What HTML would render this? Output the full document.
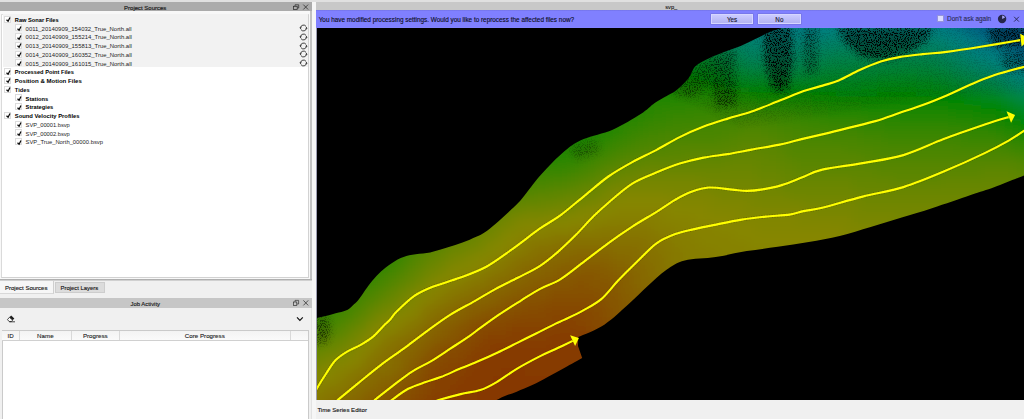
<!DOCTYPE html>
<html><head><meta charset="utf-8">
<style>
html,body{margin:0;padding:0;}
body{width:1024px;height:419px;overflow:hidden;background:#f0f0f0;position:relative;font-family:"Liberation Sans",sans-serif;font-size:6px;color:#000;}
.abs{position:absolute;}
.tbar{position:absolute;background:#ababab;text-align:center;font-size:6.1px;line-height:9.5px;color:#111;}
.row{position:absolute;left:0;width:300px;height:9px;line-height:9px;white-space:nowrap;}
.cb{position:absolute;width:7px;height:7px;background:#fff;border:0.5px solid #dcdcdc;top:-0.2px;box-sizing:border-box;}
.cb svg{position:absolute;left:-0.5px;top:-0.5px;}
.t{position:absolute;top:0;white-space:nowrap;}
.btn{position:absolute;top:13.7px;height:10.4px;width:42.8px;background:linear-gradient(#cbcbff,#b3b3f3);border:0.5px solid #d6d6ff;box-shadow:0 0 0 0.6px #7272de;box-sizing:border-box;text-align:center;font-size:6.3px;line-height:10.2px;color:#14142c;-webkit-text-stroke:0.12px #14142c;}
.hd{position:absolute;top:0;height:9px;line-height:10.4px;text-align:center;font-size:6.2px;color:#1a1a1a;-webkit-text-stroke:0.1px #1a1a1a;border-right:0.6px solid #d9d9d9;box-sizing:border-box;}
</style></head><body>

<div class="abs" style="left:0;top:0;width:1024px;height:2.1px;background:#e0e0e0;"></div>
<!-- LEFT: Project Sources -->
<div class="abs" style="left:-2px;top:2.1px;width:313.9px;height:278.5px;background:linear-gradient(#ababab,#ababab 277px,#a6a6a6 277.2px,#d0d0d0 278.5px);"></div>
<div class="abs" style="left:0;top:10.9px;width:310.2px;height:268.2px;background:#f8f8f8;"></div>
<div class="abs" style="left:310.2px;top:10.9px;width:1.7px;height:268.4px;background:#c2c2c2;"></div>
<span class="t" style="left:124.1px;top:3.9px;font-size:5.98px;line-height:8px;color:#1c1c1c;-webkit-text-stroke:0.18px #1c1c1c;">Project Sources</span>
<svg class="abs" style="left:286px;top:2px;" width="26" height="10" viewBox="0 0 26 10">
 <g fill="none" stroke="#2e2e2e" stroke-width="0.75">
  <rect x="7.5" y="4.3" width="3.7" height="3.2"/><path d="M9 4.3 V2.8 H12.7 V6 H11.2"/>
  <path d="M17.3 2.6 L22.1 7.5 M22.1 2.6 L17.3 7.5" stroke-width="0.8"/>
 </g>
</svg>
<div class="abs" style="left:1.4px;top:13.6px;width:307.3px;height:264px;background:#fff;border:0.7px solid #d2d2d2;border-top-color:#e0e0e0;border-left-color:#dadada;box-sizing:border-box;"></div>
<div class="abs" style="left:2.6px;top:14.3px;width:305.4px;height:52.9px;background:#f2f2f2;"></div>
<div class="row" style="top:15.90px;"><span class="cb" style="left:4.4px;"><svg width="7" height="7" viewBox="0 0 7 7"><path d="M1.5 3.8 L3.1 5.3 L5.0 1.4" fill="none" stroke="#0a0a0a" stroke-width="1.25" stroke-linejoin="miter"/></svg></span><span class="t" style="left:14.8px;font-size:5.68px;font-weight:bold;color:#000;">Raw Sonar Files</span></div>
<div class="row" style="top:24.65px;"><span class="cb" style="left:15.1px;"><svg width="7" height="7" viewBox="0 0 7 7"><path d="M1.5 3.8 L3.1 5.3 L5.0 1.4" fill="none" stroke="#0a0a0a" stroke-width="1.25" stroke-linejoin="miter"/></svg></span><span class="t" style="left:25.6px;font-size:5.93px;font-weight:normal;color:#1e1e1e;">0011_20140909_154032_True_North.all</span><span class="abs" style="left:298.7px;top:-0.5px;"><svg width="9" height="8" viewBox="0 0 9 8"><path d="M1.55 3.7 A3 3 0 0 1 7.1 2.5 M7.45 4.3 A3 3 0 0 1 1.9 5.5" fill="none" stroke="#222" stroke-width="0.85"/><path d="M0.5 3.3 L2.7 3.5 L1.4 5.2 Z M8.5 4.7 L6.3 4.5 L7.6 2.8 Z" fill="#222"/></svg></span></div>
<div class="row" style="top:33.40px;"><span class="cb" style="left:15.1px;"><svg width="7" height="7" viewBox="0 0 7 7"><path d="M1.5 3.8 L3.1 5.3 L5.0 1.4" fill="none" stroke="#0a0a0a" stroke-width="1.25" stroke-linejoin="miter"/></svg></span><span class="t" style="left:25.6px;font-size:5.91px;font-weight:normal;color:#1e1e1e;">0012_20140909_155214_True_North.all</span><span class="abs" style="left:298.7px;top:-0.5px;"><svg width="9" height="8" viewBox="0 0 9 8"><path d="M1.55 3.7 A3 3 0 0 1 7.1 2.5 M7.45 4.3 A3 3 0 0 1 1.9 5.5" fill="none" stroke="#222" stroke-width="0.85"/><path d="M0.5 3.3 L2.7 3.5 L1.4 5.2 Z M8.5 4.7 L6.3 4.5 L7.6 2.8 Z" fill="#222"/></svg></span></div>
<div class="row" style="top:42.15px;"><span class="cb" style="left:15.1px;"><svg width="7" height="7" viewBox="0 0 7 7"><path d="M1.5 3.8 L3.1 5.3 L5.0 1.4" fill="none" stroke="#0a0a0a" stroke-width="1.25" stroke-linejoin="miter"/></svg></span><span class="t" style="left:25.6px;font-size:5.91px;font-weight:normal;color:#1e1e1e;">0013_20140909_155813_True_North.all</span><span class="abs" style="left:298.7px;top:-0.5px;"><svg width="9" height="8" viewBox="0 0 9 8"><path d="M1.55 3.7 A3 3 0 0 1 7.1 2.5 M7.45 4.3 A3 3 0 0 1 1.9 5.5" fill="none" stroke="#222" stroke-width="0.85"/><path d="M0.5 3.3 L2.7 3.5 L1.4 5.2 Z M8.5 4.7 L6.3 4.5 L7.6 2.8 Z" fill="#222"/></svg></span></div>
<div class="row" style="top:50.90px;"><span class="cb" style="left:15.1px;"><svg width="7" height="7" viewBox="0 0 7 7"><path d="M1.5 3.8 L3.1 5.3 L5.0 1.4" fill="none" stroke="#0a0a0a" stroke-width="1.25" stroke-linejoin="miter"/></svg></span><span class="t" style="left:25.6px;font-size:5.91px;font-weight:normal;color:#1e1e1e;">0014_20140909_160352_True_North.all</span><span class="abs" style="left:298.7px;top:-0.5px;"><svg width="9" height="8" viewBox="0 0 9 8"><path d="M1.55 3.7 A3 3 0 0 1 7.1 2.5 M7.45 4.3 A3 3 0 0 1 1.9 5.5" fill="none" stroke="#222" stroke-width="0.85"/><path d="M0.5 3.3 L2.7 3.5 L1.4 5.2 Z M8.5 4.7 L6.3 4.5 L7.6 2.8 Z" fill="#222"/></svg></span></div>
<div class="row" style="top:59.65px;"><span class="cb" style="left:15.1px;"><svg width="7" height="7" viewBox="0 0 7 7"><path d="M1.5 3.8 L3.1 5.3 L5.0 1.4" fill="none" stroke="#0a0a0a" stroke-width="1.25" stroke-linejoin="miter"/></svg></span><span class="t" style="left:25.6px;font-size:5.91px;font-weight:normal;color:#1e1e1e;">0015_20140909_161015_True_North.all</span><span class="abs" style="left:298.7px;top:-0.5px;"><svg width="9" height="8" viewBox="0 0 9 8"><path d="M1.55 3.7 A3 3 0 0 1 7.1 2.5 M7.45 4.3 A3 3 0 0 1 1.9 5.5" fill="none" stroke="#222" stroke-width="0.85"/><path d="M0.5 3.3 L2.7 3.5 L1.4 5.2 Z M8.5 4.7 L6.3 4.5 L7.6 2.8 Z" fill="#222"/></svg></span></div>
<div class="row" style="top:68.40px;"><span class="cb" style="left:4.4px;"><svg width="7" height="7" viewBox="0 0 7 7"><path d="M1.5 3.8 L3.1 5.3 L5.0 1.4" fill="none" stroke="#0a0a0a" stroke-width="1.25" stroke-linejoin="miter"/></svg></span><span class="t" style="left:14.8px;font-size:5.7px;font-weight:bold;color:#000;">Processed Point Files</span></div>
<div class="row" style="top:77.15px;"><span class="cb" style="left:4.4px;"><svg width="7" height="7" viewBox="0 0 7 7"><path d="M1.5 3.8 L3.1 5.3 L5.0 1.4" fill="none" stroke="#0a0a0a" stroke-width="1.25" stroke-linejoin="miter"/></svg></span><span class="t" style="left:14.8px;font-size:6.07px;font-weight:bold;color:#000;">Position &amp; Motion Files</span></div>
<div class="row" style="top:85.90px;"><span class="cb" style="left:4.4px;"><svg width="7" height="7" viewBox="0 0 7 7"><path d="M1.5 3.8 L3.1 5.3 L5.0 1.4" fill="none" stroke="#0a0a0a" stroke-width="1.25" stroke-linejoin="miter"/></svg></span><span class="t" style="left:14.8px;font-size:5.7px;font-weight:bold;color:#000;">Tides</span></div>
<div class="row" style="top:94.65px;"><span class="cb" style="left:15.1px;"><svg width="7" height="7" viewBox="0 0 7 7"><path d="M1.5 3.8 L3.1 5.3 L5.0 1.4" fill="none" stroke="#0a0a0a" stroke-width="1.25" stroke-linejoin="miter"/></svg></span><span class="t" style="left:25.6px;font-size:5.75px;font-weight:bold;color:#000;">Stations</span></div>
<div class="row" style="top:103.40px;"><span class="cb" style="left:15.1px;"><svg width="7" height="7" viewBox="0 0 7 7"><path d="M1.5 3.8 L3.1 5.3 L5.0 1.4" fill="none" stroke="#0a0a0a" stroke-width="1.25" stroke-linejoin="miter"/></svg></span><span class="t" style="left:25.6px;font-size:5.73px;font-weight:bold;color:#000;">Strategies</span></div>
<div class="row" style="top:112.15px;"><span class="cb" style="left:4.4px;"><svg width="7" height="7" viewBox="0 0 7 7"><path d="M1.5 3.8 L3.1 5.3 L5.0 1.4" fill="none" stroke="#0a0a0a" stroke-width="1.25" stroke-linejoin="miter"/></svg></span><span class="t" style="left:14.8px;font-size:5.83px;font-weight:bold;color:#000;">Sound Velocity Profiles</span></div>
<div class="row" style="top:120.90px;"><span class="cb" style="left:15.1px;"><svg width="7" height="7" viewBox="0 0 7 7"><path d="M1.5 3.8 L3.1 5.3 L5.0 1.4" fill="none" stroke="#0a0a0a" stroke-width="1.25" stroke-linejoin="miter"/></svg></span><span class="t" style="left:25.6px;font-size:5.73px;font-weight:normal;color:#1e1e1e;">SVP_00001.bsvp</span></div>
<div class="row" style="top:129.65px;"><span class="cb" style="left:15.1px;"><svg width="7" height="7" viewBox="0 0 7 7"><path d="M1.5 3.8 L3.1 5.3 L5.0 1.4" fill="none" stroke="#0a0a0a" stroke-width="1.25" stroke-linejoin="miter"/></svg></span><span class="t" style="left:25.6px;font-size:5.73px;font-weight:normal;color:#1e1e1e;">SVP_00002.bsvp</span></div>
<div class="row" style="top:138.40px;"><span class="cb" style="left:15.1px;"><svg width="7" height="7" viewBox="0 0 7 7"><path d="M1.5 3.8 L3.1 5.3 L5.0 1.4" fill="none" stroke="#0a0a0a" stroke-width="1.25" stroke-linejoin="miter"/></svg></span><span class="t" style="left:25.6px;font-size:5.82px;font-weight:normal;color:#1e1e1e;">SVP_True_North_00000.bsvp</span></div>

<!-- tabs -->
<div class="abs" style="left:0;top:280.6px;width:54.3px;height:13px;background:#f6f6f6;border-right:0.6px solid #cfcfcf;border-bottom:0.6px solid #d8d8d8;box-sizing:border-box;"></div>
<div class="abs" style="left:54.5px;top:281.7px;width:50px;height:10.9px;background:#dcdcdc;border:0.6px solid #cdcdcd;box-sizing:border-box;"></div>
<span class="t" style="left:5px;top:283.7px;font-size:6.02px;line-height:8px;color:#111;-webkit-text-stroke:0.12px #111;">Project Sources</span>
<span class="t" style="left:60.5px;top:284px;font-size:5.92px;line-height:8px;color:#111;-webkit-text-stroke:0.12px #111;">Project Layers</span>

<!-- Job Activity -->
<div class="abs" style="left:310.6px;top:298.2px;width:1.3px;height:121px;background:#e2e2e2;"></div>
<div class="tbar" style="left:0;top:298.2px;width:311.8px;height:9.4px;background:#c6c6c6;"></div><span class="t" style="left:130.5px;top:299.6px;font-size:5.9px;line-height:8px;color:#1c1c1c;-webkit-text-stroke:0.15px #1c1c1c;">Job Activity</span>
<svg class="abs" style="left:286px;top:298.2px;" width="26" height="10" viewBox="0 0 26 10">
 <g fill="none" stroke="#333" stroke-width="0.7">
  <rect x="7.4" y="4" width="3.4" height="3.4"/><path d="M9 4 V2.4 H12.6 V6 H10.8"/>
  <path d="M17.4 2.4 L22.2 7.4 M22.2 2.4 L17.4 7.4" stroke-width="0.8"/>
 </g>
</svg>
<!-- eraser icon -->
<svg class="abs" style="left:6px;top:314px;" width="10" height="10" viewBox="0 0 10 10">
 <path d="M5.2 1.6 L8.3 4.6 L6.7 6.2 L3.4 3.3 Z" fill="#1c1c1c"/>
 <path d="M3.4 3.3 L6.7 6.2 L5.2 7.6 L3.2 7.6 L1.5 5.6 Z" fill="#fafafa" stroke="#1c1c1c" stroke-width="0.8" stroke-linejoin="round"/>
 <path d="M3.4 7.8 H9" stroke="#1c1c1c" stroke-width="0.8"/>
</svg>
<svg class="abs" style="left:295px;top:314px;" width="10" height="10" viewBox="0 0 10 10"><path d="M2 3.4 L4.9 6.3 L7.8 3.4" fill="none" stroke="#111" stroke-width="1.2"/></svg>
<!-- table -->
<div class="abs" style="left:1.5px;top:330.2px;width:307.2px;height:90px;background:#fff;border:0.8px solid #cacaca;box-sizing:border-box;"></div>
<div class="abs" style="left:2.3px;top:331px;width:305.6px;height:9px;background:linear-gradient(#f3f3f3,#fafafa);border-bottom:0.6px solid #d0d0d0;">
 <div class="hd" style="left:0;width:17.6px;">ID</div>
 <div class="hd" style="left:17.6px;width:51.9px;">Name</div>
 <div class="hd" style="left:69.5px;width:48px;">Progress</div>
 <div class="hd" style="left:117.5px;width:171px;">Core Progress</div>
</div>

<!-- splitter -->
<div class="abs" style="left:311.9px;top:2.1px;width:3.9px;height:417px;background:#f6f6f6;"></div>

<!-- MAIN -->
<div class="abs" style="left:316.3px;top:2.1px;width:708px;height:7.8px;background:#c8c8c8;"></div>
<span class="t" style="left:665.2px;top:2.7px;font-size:5.7px;line-height:8px;color:#111;-webkit-text-stroke:0.1px #111;">svp_</span>
<div class="abs" style="left:316.3px;top:9.8px;width:708px;height:18.2px;background:linear-gradient(#7272e4,#8080ff 1.2px,#8080ff 17.4px,#8888ff 17.7px,#7070e0 18.2px);"></div>
<span class="t" style="left:318.7px;top:15.5px;font-size:6.39px;line-height:8px;color:#0c0c20;-webkit-text-stroke:0.12px #0c0c20;">You have modified processing settings. Would you like to reprocess the affected files now?</span>
<div class="btn" style="left:710.7px;">Yes</div>
<div class="btn" style="left:758px;">No</div>
<div class="abs" style="left:936.8px;top:15.3px;width:7.4px;height:7px;background:#dcdcff;border:0.5px solid #9494dc;box-sizing:border-box;"></div>
<span class="t" style="left:947px;top:15.4px;font-size:6.45px;line-height:8px;color:#2a2a50;-webkit-text-stroke:0.1px #2a2a50;">Don't ask again</span>
<svg class="abs" style="left:996px;top:13px;" width="26" height="12" viewBox="0 0 26 12">
 <circle cx="6.1" cy="6" r="4.2" fill="#26264a"/>
 <path d="M6.1 6 L6.1 2.6 A3.4 3.4 0 0 1 9.1 4.4 Z" fill="#a0a0f0"/>
 <path d="M18.1 3.8 L22.9 8.6 M22.9 3.8 L18.1 8.6" stroke="#2a2a58" stroke-width="0.95" fill="none"/>
</svg>

<div class="abs" id="map" style="left:316.3px;top:27.9px;width:707.7px;height:371.8px;background:#000;overflow:hidden;border-left:0.8px solid #9c9cb0;box-sizing:border-box;">
<svg class="abs" style="left:0;top:0;" width="707.7" height="371.8" viewBox="316.3 27.9 707.7 371.8">
<defs>
<clipPath id="cp"><path d="M314.0 318.5C315.8 318.1 321.0 317.0 325.0 316.0C329.0 315.0 334.3 313.6 338.0 312.5C341.7 311.4 344.7 310.8 347.0 309.6C349.3 308.4 350.2 307.2 352.0 305.5C353.8 303.8 355.2 303.1 358.0 299.5C360.8 295.9 365.7 288.3 369.0 284.0C372.3 279.7 374.9 276.8 378.0 273.7C381.1 270.6 384.0 268.1 387.7 265.5C391.4 262.9 396.0 259.8 400.0 258.0C404.0 256.2 407.3 255.4 411.6 254.6C415.9 253.8 421.3 253.9 426.0 253.0C430.7 252.1 435.2 250.6 440.0 249.3C444.8 248.0 449.8 246.6 454.6 245.0C459.4 243.4 464.3 241.6 469.0 239.6C473.7 237.6 478.7 235.7 483.0 233.0C487.3 230.3 490.8 227.1 495.0 223.6C499.2 220.1 503.7 216.1 508.0 212.0C512.3 207.9 515.7 205.2 521.0 199.0C526.3 192.8 532.8 183.0 540.0 175.0C547.2 167.0 556.8 157.0 564.0 151.0C571.2 145.0 575.0 142.6 583.0 139.0C591.0 135.4 602.5 133.8 612.0 129.6C621.5 125.4 633.0 118.4 640.0 114.0C647.0 109.6 649.7 106.0 654.0 103.0C658.3 100.0 662.3 98.2 666.0 96.0C669.7 93.8 672.3 93.0 676.0 90.0C679.7 87.0 684.8 82.0 688.0 78.0C691.2 74.0 691.5 69.3 695.0 66.0C698.5 62.7 704.2 60.3 709.0 58.0C713.8 55.7 718.3 54.0 723.5 52.0C728.7 50.0 734.8 48.2 740.0 46.0C745.2 43.8 749.8 41.3 754.6 39.0C759.4 36.7 764.6 33.8 769.0 32.0C773.4 30.2 777.5 29.7 781.0 28.0C784.5 26.3 788.5 23.0 790.0 22.0L1030 20L1030 172C1029.0 172.5 1030.0 172.5 1024.0 175.0C1018.0 177.5 1003.0 183.7 994.0 187.0C985.0 190.3 980.3 191.5 970.0 195.0C959.7 198.5 943.5 204.2 932.0 208.0C920.5 211.8 911.3 214.3 901.0 217.5C890.7 220.7 880.3 223.9 870.0 227.0C859.7 230.1 849.3 233.5 839.0 236.0C828.7 238.5 818.3 240.2 808.0 242.0C797.7 243.8 787.3 245.2 777.0 246.7C766.7 248.2 756.3 249.3 746.0 251.0C735.7 252.7 725.3 255.4 715.0 257.0C704.7 258.6 692.2 258.3 684.0 260.5C675.8 262.7 671.7 265.8 665.5 270.0C659.3 274.2 653.2 280.3 647.0 286.0C640.8 291.7 635.2 297.6 628.0 304.0C620.8 310.4 612.4 318.8 604.0 324.3C595.6 329.8 581.9 334.9 577.5 337.0L577.3 346L581.5 358C578.6 359.6 569.8 364.5 564.0 367.7C558.2 370.9 552.4 374.1 547.0 377.0C541.6 379.9 536.8 382.6 531.6 385.0C526.4 387.4 520.8 389.7 516.0 391.6C511.2 393.5 506.8 394.7 503.0 396.3C499.2 397.9 494.7 400.6 493.0 401.5L314 402Z"/></clipPath>
<filter id="cb" filterUnits="userSpaceOnUse" x="290" y="0" width="760" height="430"><feGaussianBlur stdDeviation="5"/></filter>
<filter id="db" filterUnits="userSpaceOnUse" x="290" y="0" width="760" height="430"><feGaussianBlur stdDeviation="3.5"/></filter>
<filter id="nz" filterUnits="userSpaceOnUse" x="290" y="0" width="760" height="430"><feTurbulence type="fractalNoise" baseFrequency="0.9" numOctaves="2" seed="7" result="n"/><feColorMatrix in="n" type="matrix" values="0 0 0 0 0  0 0 0 0 0  0 0 0 0 0  0 0 0 9 -4.6"/></filter>
<mask id="dm" maskUnits="userSpaceOnUse" x="290" y="0" width="760" height="430"><g filter="url(#db)" fill="#fff">
<path d="M763 27L791 27L792 60L787 91L772 90L764 60Z" opacity="1"/>
<path d="M802 27L817 27L816 72L804 74Z" opacity="0.5"/>
<path d="M836 27L932 27L926 40L908 52L886 59L862 57L846 44Z" opacity="1"/>
<path d="M988 27L1030 27L1030 47L992 47Z" opacity="0.85"/>
<path d="M1000 54L1030 52L1030 72L1004 70Z" opacity="0.55"/>
<path d="M706 58L733 50L736 104L716 108Z" opacity="0.55"/>
<path d="M672 94L690 70L706 58L710 84L690 98Z" opacity="0.45"/>
<path d="M740 27L1030 27L1030 90L900 100L740 125L690 100Z" opacity="0.1"/>
<path d="M314 318L326 316L330 330L326 342L314 344Z" opacity="0.5"/>
<path d="M568 146L596 140L598 152L576 159Z" opacity="0.3"/>
</g></mask>
</defs>
<g clip-path="url(#cp)">
<g filter="url(#cb)">
<path fill="#863302" d="M548 392h8.5v8.5h-8.5zM508 400h8.5v8.5h-8.5zM516 400h8.5v8.5h-8.5zM524 400h8.5v8.5h-8.5zM532 400h8.5v8.5h-8.5zM484 408h8.5v8.5h-8.5zM492 408h8.5v8.5h-8.5zM500 408h8.5v8.5h-8.5zM508 408h8.5v8.5h-8.5zM516 408h8.5v8.5h-8.5zM460 416h8.5v8.5h-8.5zM468 416h8.5v8.5h-8.5zM476 416h8.5v8.5h-8.5zM484 416h8.5v8.5h-8.5zM492 416h8.5v8.5h-8.5z"/>
<path fill="#863702" d="M500 368h8.5v8.5h-8.5zM508 368h8.5v8.5h-8.5zM516 368h8.5v8.5h-8.5zM492 376h8.5v8.5h-8.5zM500 376h8.5v8.5h-8.5zM508 376h8.5v8.5h-8.5zM516 376h8.5v8.5h-8.5zM524 376h8.5v8.5h-8.5zM532 376h8.5v8.5h-8.5zM540 376h8.5v8.5h-8.5zM548 376h8.5v8.5h-8.5zM556 376h8.5v8.5h-8.5zM564 376h8.5v8.5h-8.5zM572 376h8.5v8.5h-8.5zM580 376h8.5v8.5h-8.5zM484 384h8.5v8.5h-8.5zM492 384h8.5v8.5h-8.5zM500 384h8.5v8.5h-8.5zM508 384h8.5v8.5h-8.5zM516 384h8.5v8.5h-8.5zM524 384h8.5v8.5h-8.5zM532 384h8.5v8.5h-8.5zM540 384h8.5v8.5h-8.5zM548 384h8.5v8.5h-8.5zM556 384h8.5v8.5h-8.5zM564 384h8.5v8.5h-8.5zM476 392h8.5v8.5h-8.5zM484 392h8.5v8.5h-8.5zM492 392h8.5v8.5h-8.5zM500 392h8.5v8.5h-8.5zM508 392h8.5v8.5h-8.5zM516 392h8.5v8.5h-8.5zM524 392h8.5v8.5h-8.5zM532 392h8.5v8.5h-8.5zM540 392h8.5v8.5h-8.5zM468 400h8.5v8.5h-8.5zM476 400h8.5v8.5h-8.5zM484 400h8.5v8.5h-8.5zM492 400h8.5v8.5h-8.5zM500 400h8.5v8.5h-8.5zM444 408h8.5v8.5h-8.5zM452 408h8.5v8.5h-8.5zM460 408h8.5v8.5h-8.5zM468 408h8.5v8.5h-8.5zM476 408h8.5v8.5h-8.5zM436 416h8.5v8.5h-8.5zM444 416h8.5v8.5h-8.5zM452 416h8.5v8.5h-8.5z"/>
<path fill="#863b02" d="M548 336h8.5v8.5h-8.5zM556 336h8.5v8.5h-8.5zM564 336h8.5v8.5h-8.5zM572 336h8.5v8.5h-8.5zM492 344h8.5v8.5h-8.5zM500 344h8.5v8.5h-8.5zM508 344h8.5v8.5h-8.5zM516 344h8.5v8.5h-8.5zM524 344h8.5v8.5h-8.5zM532 344h8.5v8.5h-8.5zM540 344h8.5v8.5h-8.5zM548 344h8.5v8.5h-8.5zM556 344h8.5v8.5h-8.5zM564 344h8.5v8.5h-8.5zM572 344h8.5v8.5h-8.5zM580 344h8.5v8.5h-8.5zM484 352h8.5v8.5h-8.5zM492 352h8.5v8.5h-8.5zM500 352h8.5v8.5h-8.5zM508 352h8.5v8.5h-8.5zM516 352h8.5v8.5h-8.5zM524 352h8.5v8.5h-8.5zM532 352h8.5v8.5h-8.5zM540 352h8.5v8.5h-8.5zM548 352h8.5v8.5h-8.5zM556 352h8.5v8.5h-8.5zM564 352h8.5v8.5h-8.5zM572 352h8.5v8.5h-8.5zM580 352h8.5v8.5h-8.5zM476 360h8.5v8.5h-8.5zM484 360h8.5v8.5h-8.5zM492 360h8.5v8.5h-8.5zM500 360h8.5v8.5h-8.5zM508 360h8.5v8.5h-8.5zM516 360h8.5v8.5h-8.5zM524 360h8.5v8.5h-8.5zM532 360h8.5v8.5h-8.5zM540 360h8.5v8.5h-8.5zM548 360h8.5v8.5h-8.5zM556 360h8.5v8.5h-8.5zM564 360h8.5v8.5h-8.5zM572 360h8.5v8.5h-8.5zM580 360h8.5v8.5h-8.5zM588 360h8.5v8.5h-8.5zM468 368h8.5v8.5h-8.5zM476 368h8.5v8.5h-8.5zM484 368h8.5v8.5h-8.5zM492 368h8.5v8.5h-8.5zM524 368h8.5v8.5h-8.5zM532 368h8.5v8.5h-8.5zM540 368h8.5v8.5h-8.5zM548 368h8.5v8.5h-8.5zM556 368h8.5v8.5h-8.5zM564 368h8.5v8.5h-8.5zM572 368h8.5v8.5h-8.5zM580 368h8.5v8.5h-8.5zM588 368h8.5v8.5h-8.5zM460 376h8.5v8.5h-8.5zM468 376h8.5v8.5h-8.5zM476 376h8.5v8.5h-8.5zM484 376h8.5v8.5h-8.5zM452 384h8.5v8.5h-8.5zM460 384h8.5v8.5h-8.5zM468 384h8.5v8.5h-8.5zM476 384h8.5v8.5h-8.5zM444 392h8.5v8.5h-8.5zM452 392h8.5v8.5h-8.5zM460 392h8.5v8.5h-8.5zM468 392h8.5v8.5h-8.5zM436 400h8.5v8.5h-8.5zM444 400h8.5v8.5h-8.5zM452 400h8.5v8.5h-8.5zM460 400h8.5v8.5h-8.5zM428 408h8.5v8.5h-8.5zM436 408h8.5v8.5h-8.5zM420 416h8.5v8.5h-8.5zM428 416h8.5v8.5h-8.5z"/>
<path fill="#864002" d="M556 320h8.5v8.5h-8.5zM564 320h8.5v8.5h-8.5zM508 328h8.5v8.5h-8.5zM516 328h8.5v8.5h-8.5zM524 328h8.5v8.5h-8.5zM532 328h8.5v8.5h-8.5zM540 328h8.5v8.5h-8.5zM548 328h8.5v8.5h-8.5zM556 328h8.5v8.5h-8.5zM564 328h8.5v8.5h-8.5zM572 328h8.5v8.5h-8.5zM580 328h8.5v8.5h-8.5zM484 336h8.5v8.5h-8.5zM492 336h8.5v8.5h-8.5zM500 336h8.5v8.5h-8.5zM508 336h8.5v8.5h-8.5zM516 336h8.5v8.5h-8.5zM524 336h8.5v8.5h-8.5zM532 336h8.5v8.5h-8.5zM540 336h8.5v8.5h-8.5zM580 336h8.5v8.5h-8.5zM588 336h8.5v8.5h-8.5zM476 344h8.5v8.5h-8.5zM484 344h8.5v8.5h-8.5zM588 344h8.5v8.5h-8.5zM468 352h8.5v8.5h-8.5zM476 352h8.5v8.5h-8.5zM588 352h8.5v8.5h-8.5zM596 352h8.5v8.5h-8.5zM460 360h8.5v8.5h-8.5zM468 360h8.5v8.5h-8.5zM596 360h8.5v8.5h-8.5zM452 368h8.5v8.5h-8.5zM460 368h8.5v8.5h-8.5zM436 376h8.5v8.5h-8.5zM444 376h8.5v8.5h-8.5zM452 376h8.5v8.5h-8.5zM436 384h8.5v8.5h-8.5zM444 384h8.5v8.5h-8.5zM428 392h8.5v8.5h-8.5zM436 392h8.5v8.5h-8.5zM420 400h8.5v8.5h-8.5zM428 400h8.5v8.5h-8.5zM420 408h8.5v8.5h-8.5zM412 416h8.5v8.5h-8.5z"/>
<path fill="#864402" d="M548 312h8.5v8.5h-8.5zM556 312h8.5v8.5h-8.5zM564 312h8.5v8.5h-8.5zM572 312h8.5v8.5h-8.5zM508 320h8.5v8.5h-8.5zM516 320h8.5v8.5h-8.5zM524 320h8.5v8.5h-8.5zM532 320h8.5v8.5h-8.5zM540 320h8.5v8.5h-8.5zM548 320h8.5v8.5h-8.5zM572 320h8.5v8.5h-8.5zM580 320h8.5v8.5h-8.5zM484 328h8.5v8.5h-8.5zM492 328h8.5v8.5h-8.5zM500 328h8.5v8.5h-8.5zM588 328h8.5v8.5h-8.5zM476 336h8.5v8.5h-8.5zM596 336h8.5v8.5h-8.5zM468 344h8.5v8.5h-8.5zM596 344h8.5v8.5h-8.5zM460 352h8.5v8.5h-8.5zM444 360h8.5v8.5h-8.5zM452 360h8.5v8.5h-8.5zM436 368h8.5v8.5h-8.5zM444 368h8.5v8.5h-8.5zM428 376h8.5v8.5h-8.5zM428 384h8.5v8.5h-8.5zM420 392h8.5v8.5h-8.5zM412 400h8.5v8.5h-8.5zM404 408h8.5v8.5h-8.5zM412 408h8.5v8.5h-8.5zM396 416h8.5v8.5h-8.5zM404 416h8.5v8.5h-8.5z"/>
<path fill="#864902" d="M540 304h8.5v8.5h-8.5zM548 304h8.5v8.5h-8.5zM556 304h8.5v8.5h-8.5zM564 304h8.5v8.5h-8.5zM572 304h8.5v8.5h-8.5zM580 304h8.5v8.5h-8.5zM516 312h8.5v8.5h-8.5zM524 312h8.5v8.5h-8.5zM532 312h8.5v8.5h-8.5zM540 312h8.5v8.5h-8.5zM580 312h8.5v8.5h-8.5zM588 312h8.5v8.5h-8.5zM492 320h8.5v8.5h-8.5zM500 320h8.5v8.5h-8.5zM588 320h8.5v8.5h-8.5zM596 320h8.5v8.5h-8.5zM476 328h8.5v8.5h-8.5zM596 328h8.5v8.5h-8.5zM468 336h8.5v8.5h-8.5zM604 336h8.5v8.5h-8.5zM452 344h8.5v8.5h-8.5zM460 344h8.5v8.5h-8.5zM444 352h8.5v8.5h-8.5zM452 352h8.5v8.5h-8.5zM436 360h8.5v8.5h-8.5zM428 368h8.5v8.5h-8.5zM420 376h8.5v8.5h-8.5zM420 384h8.5v8.5h-8.5zM412 392h8.5v8.5h-8.5zM404 400h8.5v8.5h-8.5zM396 408h8.5v8.5h-8.5zM388 416h8.5v8.5h-8.5z"/>
<path fill="#864d02" d="M548 296h8.5v8.5h-8.5zM556 296h8.5v8.5h-8.5zM564 296h8.5v8.5h-8.5zM572 296h8.5v8.5h-8.5zM580 296h8.5v8.5h-8.5zM588 296h8.5v8.5h-8.5zM524 304h8.5v8.5h-8.5zM532 304h8.5v8.5h-8.5zM588 304h8.5v8.5h-8.5zM596 304h8.5v8.5h-8.5zM500 312h8.5v8.5h-8.5zM508 312h8.5v8.5h-8.5zM596 312h8.5v8.5h-8.5zM476 320h8.5v8.5h-8.5zM484 320h8.5v8.5h-8.5zM604 320h8.5v8.5h-8.5zM468 328h8.5v8.5h-8.5zM604 328h8.5v8.5h-8.5zM460 336h8.5v8.5h-8.5zM612 336h8.5v8.5h-8.5zM444 344h8.5v8.5h-8.5zM436 352h8.5v8.5h-8.5zM428 360h8.5v8.5h-8.5zM420 368h8.5v8.5h-8.5zM412 384h8.5v8.5h-8.5zM404 392h8.5v8.5h-8.5zM396 400h8.5v8.5h-8.5zM388 408h8.5v8.5h-8.5zM372 416h8.5v8.5h-8.5zM380 416h8.5v8.5h-8.5z"/>
<path fill="#865102" d="M572 280h8.5v8.5h-8.5zM580 280h8.5v8.5h-8.5zM548 288h8.5v8.5h-8.5zM556 288h8.5v8.5h-8.5zM564 288h8.5v8.5h-8.5zM572 288h8.5v8.5h-8.5zM580 288h8.5v8.5h-8.5zM588 288h8.5v8.5h-8.5zM596 288h8.5v8.5h-8.5zM524 296h8.5v8.5h-8.5zM532 296h8.5v8.5h-8.5zM540 296h8.5v8.5h-8.5zM596 296h8.5v8.5h-8.5zM508 304h8.5v8.5h-8.5zM516 304h8.5v8.5h-8.5zM604 304h8.5v8.5h-8.5zM484 312h8.5v8.5h-8.5zM492 312h8.5v8.5h-8.5zM604 312h8.5v8.5h-8.5zM468 320h8.5v8.5h-8.5zM612 320h8.5v8.5h-8.5zM460 328h8.5v8.5h-8.5zM612 328h8.5v8.5h-8.5zM620 328h8.5v8.5h-8.5zM452 336h8.5v8.5h-8.5zM436 344h8.5v8.5h-8.5zM428 352h8.5v8.5h-8.5zM420 360h8.5v8.5h-8.5zM412 376h8.5v8.5h-8.5zM404 384h8.5v8.5h-8.5zM396 392h8.5v8.5h-8.5zM388 400h8.5v8.5h-8.5zM380 408h8.5v8.5h-8.5zM364 416h8.5v8.5h-8.5z"/>
<path fill="#865602" d="M572 272h8.5v8.5h-8.5zM580 272h8.5v8.5h-8.5zM588 272h8.5v8.5h-8.5zM548 280h8.5v8.5h-8.5zM556 280h8.5v8.5h-8.5zM564 280h8.5v8.5h-8.5zM588 280h8.5v8.5h-8.5zM596 280h8.5v8.5h-8.5zM604 280h8.5v8.5h-8.5zM532 288h8.5v8.5h-8.5zM540 288h8.5v8.5h-8.5zM604 288h8.5v8.5h-8.5zM508 296h8.5v8.5h-8.5zM516 296h8.5v8.5h-8.5zM604 296h8.5v8.5h-8.5zM612 296h8.5v8.5h-8.5zM492 304h8.5v8.5h-8.5zM500 304h8.5v8.5h-8.5zM612 304h8.5v8.5h-8.5zM476 312h8.5v8.5h-8.5zM612 312h8.5v8.5h-8.5zM460 320h8.5v8.5h-8.5zM620 320h8.5v8.5h-8.5zM452 328h8.5v8.5h-8.5zM444 336h8.5v8.5h-8.5zM428 344h8.5v8.5h-8.5zM420 352h8.5v8.5h-8.5zM412 368h8.5v8.5h-8.5zM404 376h8.5v8.5h-8.5zM396 384h8.5v8.5h-8.5zM388 392h8.5v8.5h-8.5zM380 400h8.5v8.5h-8.5zM364 408h8.5v8.5h-8.5zM372 408h8.5v8.5h-8.5zM356 416h8.5v8.5h-8.5z"/>
<path fill="#865a02" d="M580 264h8.5v8.5h-8.5zM588 264h8.5v8.5h-8.5zM596 264h8.5v8.5h-8.5zM556 272h8.5v8.5h-8.5zM564 272h8.5v8.5h-8.5zM596 272h8.5v8.5h-8.5zM604 272h8.5v8.5h-8.5zM532 280h8.5v8.5h-8.5zM540 280h8.5v8.5h-8.5zM612 280h8.5v8.5h-8.5zM516 288h8.5v8.5h-8.5zM524 288h8.5v8.5h-8.5zM612 288h8.5v8.5h-8.5zM500 296h8.5v8.5h-8.5zM620 296h8.5v8.5h-8.5zM484 304h8.5v8.5h-8.5zM620 304h8.5v8.5h-8.5zM468 312h8.5v8.5h-8.5zM620 312h8.5v8.5h-8.5zM628 312h8.5v8.5h-8.5zM452 320h8.5v8.5h-8.5zM628 320h8.5v8.5h-8.5zM444 328h8.5v8.5h-8.5zM436 336h8.5v8.5h-8.5zM412 360h8.5v8.5h-8.5zM404 368h8.5v8.5h-8.5zM396 376h8.5v8.5h-8.5zM388 384h8.5v8.5h-8.5zM380 392h8.5v8.5h-8.5zM364 400h8.5v8.5h-8.5zM372 400h8.5v8.5h-8.5zM356 408h8.5v8.5h-8.5zM348 416h8.5v8.5h-8.5z"/>
<path fill="#865f02" d="M556 264h8.5v8.5h-8.5zM564 264h8.5v8.5h-8.5zM572 264h8.5v8.5h-8.5zM604 264h8.5v8.5h-8.5zM540 272h8.5v8.5h-8.5zM548 272h8.5v8.5h-8.5zM612 272h8.5v8.5h-8.5zM620 272h8.5v8.5h-8.5zM524 280h8.5v8.5h-8.5zM620 280h8.5v8.5h-8.5zM508 288h8.5v8.5h-8.5zM620 288h8.5v8.5h-8.5zM628 288h8.5v8.5h-8.5zM492 296h8.5v8.5h-8.5zM628 296h8.5v8.5h-8.5zM468 304h8.5v8.5h-8.5zM476 304h8.5v8.5h-8.5zM628 304h8.5v8.5h-8.5zM636 304h8.5v8.5h-8.5zM460 312h8.5v8.5h-8.5zM636 312h8.5v8.5h-8.5zM444 320h8.5v8.5h-8.5zM436 328h8.5v8.5h-8.5zM428 336h8.5v8.5h-8.5zM420 344h8.5v8.5h-8.5zM412 352h8.5v8.5h-8.5zM404 360h8.5v8.5h-8.5zM380 384h8.5v8.5h-8.5zM364 392h8.5v8.5h-8.5zM372 392h8.5v8.5h-8.5zM356 400h8.5v8.5h-8.5zM348 408h8.5v8.5h-8.5zM332 416h8.5v8.5h-8.5zM340 416h8.5v8.5h-8.5z"/>
<path fill="#866302" d="M564 256h8.5v8.5h-8.5zM572 256h8.5v8.5h-8.5zM580 256h8.5v8.5h-8.5zM588 256h8.5v8.5h-8.5zM596 256h8.5v8.5h-8.5zM604 256h8.5v8.5h-8.5zM540 264h8.5v8.5h-8.5zM548 264h8.5v8.5h-8.5zM612 264h8.5v8.5h-8.5zM620 264h8.5v8.5h-8.5zM524 272h8.5v8.5h-8.5zM532 272h8.5v8.5h-8.5zM628 272h8.5v8.5h-8.5zM508 280h8.5v8.5h-8.5zM516 280h8.5v8.5h-8.5zM628 280h8.5v8.5h-8.5zM492 288h8.5v8.5h-8.5zM500 288h8.5v8.5h-8.5zM636 288h8.5v8.5h-8.5zM476 296h8.5v8.5h-8.5zM484 296h8.5v8.5h-8.5zM636 296h8.5v8.5h-8.5zM460 304h8.5v8.5h-8.5zM644 304h8.5v8.5h-8.5zM452 312h8.5v8.5h-8.5zM436 320h8.5v8.5h-8.5zM428 328h8.5v8.5h-8.5zM420 336h8.5v8.5h-8.5zM412 344h8.5v8.5h-8.5zM404 352h8.5v8.5h-8.5zM396 368h8.5v8.5h-8.5zM380 376h8.5v8.5h-8.5zM388 376h8.5v8.5h-8.5zM372 384h8.5v8.5h-8.5zM348 400h8.5v8.5h-8.5zM340 408h8.5v8.5h-8.5zM324 416h8.5v8.5h-8.5z"/>
<path fill="#866702" d="M572 248h8.5v8.5h-8.5zM580 248h8.5v8.5h-8.5zM588 248h8.5v8.5h-8.5zM596 248h8.5v8.5h-8.5zM604 248h8.5v8.5h-8.5zM540 256h8.5v8.5h-8.5zM548 256h8.5v8.5h-8.5zM556 256h8.5v8.5h-8.5zM612 256h8.5v8.5h-8.5zM620 256h8.5v8.5h-8.5zM524 264h8.5v8.5h-8.5zM532 264h8.5v8.5h-8.5zM628 264h8.5v8.5h-8.5zM636 264h8.5v8.5h-8.5zM516 272h8.5v8.5h-8.5zM636 272h8.5v8.5h-8.5zM500 280h8.5v8.5h-8.5zM636 280h8.5v8.5h-8.5zM644 280h8.5v8.5h-8.5zM484 288h8.5v8.5h-8.5zM644 288h8.5v8.5h-8.5zM468 296h8.5v8.5h-8.5zM644 296h8.5v8.5h-8.5zM652 296h8.5v8.5h-8.5zM452 304h8.5v8.5h-8.5zM444 312h8.5v8.5h-8.5zM428 320h8.5v8.5h-8.5zM420 328h8.5v8.5h-8.5zM412 336h8.5v8.5h-8.5zM404 344h8.5v8.5h-8.5zM396 352h8.5v8.5h-8.5zM396 360h8.5v8.5h-8.5zM388 368h8.5v8.5h-8.5zM372 376h8.5v8.5h-8.5zM364 384h8.5v8.5h-8.5zM356 392h8.5v8.5h-8.5zM340 400h8.5v8.5h-8.5zM324 408h8.5v8.5h-8.5zM332 408h8.5v8.5h-8.5zM316 416h8.5v8.5h-8.5z"/>
<path fill="#866c02" d="M548 248h8.5v8.5h-8.5zM556 248h8.5v8.5h-8.5zM564 248h8.5v8.5h-8.5zM612 248h8.5v8.5h-8.5zM620 248h8.5v8.5h-8.5zM628 248h8.5v8.5h-8.5zM532 256h8.5v8.5h-8.5zM628 256h8.5v8.5h-8.5zM636 256h8.5v8.5h-8.5zM516 264h8.5v8.5h-8.5zM644 264h8.5v8.5h-8.5zM508 272h8.5v8.5h-8.5zM644 272h8.5v8.5h-8.5zM492 280h8.5v8.5h-8.5zM652 280h8.5v8.5h-8.5zM476 288h8.5v8.5h-8.5zM652 288h8.5v8.5h-8.5zM660 288h8.5v8.5h-8.5zM460 296h8.5v8.5h-8.5zM444 304h8.5v8.5h-8.5zM436 312h8.5v8.5h-8.5zM404 336h8.5v8.5h-8.5zM396 344h8.5v8.5h-8.5zM388 352h8.5v8.5h-8.5zM388 360h8.5v8.5h-8.5zM372 368h8.5v8.5h-8.5zM380 368h8.5v8.5h-8.5zM364 376h8.5v8.5h-8.5zM356 384h8.5v8.5h-8.5zM340 392h8.5v8.5h-8.5zM348 392h8.5v8.5h-8.5zM332 400h8.5v8.5h-8.5zM316 408h8.5v8.5h-8.5zM300 416h8.5v8.5h-8.5zM308 416h8.5v8.5h-8.5z"/>
<path fill="#867002" d="M556 240h8.5v8.5h-8.5zM564 240h8.5v8.5h-8.5zM572 240h8.5v8.5h-8.5zM580 240h8.5v8.5h-8.5zM588 240h8.5v8.5h-8.5zM596 240h8.5v8.5h-8.5zM604 240h8.5v8.5h-8.5zM612 240h8.5v8.5h-8.5zM620 240h8.5v8.5h-8.5zM628 240h8.5v8.5h-8.5zM636 240h8.5v8.5h-8.5zM532 248h8.5v8.5h-8.5zM540 248h8.5v8.5h-8.5zM636 248h8.5v8.5h-8.5zM644 248h8.5v8.5h-8.5zM516 256h8.5v8.5h-8.5zM524 256h8.5v8.5h-8.5zM644 256h8.5v8.5h-8.5zM652 256h8.5v8.5h-8.5zM508 264h8.5v8.5h-8.5zM652 264h8.5v8.5h-8.5zM492 272h8.5v8.5h-8.5zM500 272h8.5v8.5h-8.5zM652 272h8.5v8.5h-8.5zM660 272h8.5v8.5h-8.5zM484 280h8.5v8.5h-8.5zM660 280h8.5v8.5h-8.5zM468 288h8.5v8.5h-8.5zM668 288h8.5v8.5h-8.5zM452 296h8.5v8.5h-8.5zM436 304h8.5v8.5h-8.5zM428 312h8.5v8.5h-8.5zM420 320h8.5v8.5h-8.5zM412 328h8.5v8.5h-8.5zM396 336h8.5v8.5h-8.5zM388 344h8.5v8.5h-8.5zM380 352h8.5v8.5h-8.5zM372 360h8.5v8.5h-8.5zM380 360h8.5v8.5h-8.5zM364 368h8.5v8.5h-8.5zM356 376h8.5v8.5h-8.5zM348 384h8.5v8.5h-8.5zM332 392h8.5v8.5h-8.5zM324 400h8.5v8.5h-8.5zM308 408h8.5v8.5h-8.5z"/>
<path fill="#867502" d="M572 232h8.5v8.5h-8.5zM580 232h8.5v8.5h-8.5zM588 232h8.5v8.5h-8.5zM596 232h8.5v8.5h-8.5zM604 232h8.5v8.5h-8.5zM612 232h8.5v8.5h-8.5zM620 232h8.5v8.5h-8.5zM628 232h8.5v8.5h-8.5zM636 232h8.5v8.5h-8.5zM644 232h8.5v8.5h-8.5zM532 240h8.5v8.5h-8.5zM540 240h8.5v8.5h-8.5zM548 240h8.5v8.5h-8.5zM644 240h8.5v8.5h-8.5zM652 240h8.5v8.5h-8.5zM524 248h8.5v8.5h-8.5zM652 248h8.5v8.5h-8.5zM660 248h8.5v8.5h-8.5zM508 256h8.5v8.5h-8.5zM660 256h8.5v8.5h-8.5zM500 264h8.5v8.5h-8.5zM660 264h8.5v8.5h-8.5zM668 264h8.5v8.5h-8.5zM484 272h8.5v8.5h-8.5zM668 272h8.5v8.5h-8.5zM468 280h8.5v8.5h-8.5zM476 280h8.5v8.5h-8.5zM668 280h8.5v8.5h-8.5zM676 280h8.5v8.5h-8.5zM452 288h8.5v8.5h-8.5zM460 288h8.5v8.5h-8.5zM444 296h8.5v8.5h-8.5zM428 304h8.5v8.5h-8.5zM420 312h8.5v8.5h-8.5zM412 320h8.5v8.5h-8.5zM404 328h8.5v8.5h-8.5zM388 336h8.5v8.5h-8.5zM380 344h8.5v8.5h-8.5zM372 352h8.5v8.5h-8.5zM364 360h8.5v8.5h-8.5zM356 368h8.5v8.5h-8.5zM348 376h8.5v8.5h-8.5zM340 384h8.5v8.5h-8.5zM324 392h8.5v8.5h-8.5zM308 400h8.5v8.5h-8.5zM316 400h8.5v8.5h-8.5zM300 408h8.5v8.5h-8.5z"/>
<path fill="#867902" d="M596 224h8.5v8.5h-8.5zM604 224h8.5v8.5h-8.5zM612 224h8.5v8.5h-8.5zM620 224h8.5v8.5h-8.5zM628 224h8.5v8.5h-8.5zM636 224h8.5v8.5h-8.5zM644 224h8.5v8.5h-8.5zM548 232h8.5v8.5h-8.5zM556 232h8.5v8.5h-8.5zM564 232h8.5v8.5h-8.5zM652 232h8.5v8.5h-8.5zM660 232h8.5v8.5h-8.5zM524 240h8.5v8.5h-8.5zM660 240h8.5v8.5h-8.5zM668 240h8.5v8.5h-8.5zM516 248h8.5v8.5h-8.5zM668 248h8.5v8.5h-8.5zM676 248h8.5v8.5h-8.5zM500 256h8.5v8.5h-8.5zM668 256h8.5v8.5h-8.5zM676 256h8.5v8.5h-8.5zM492 264h8.5v8.5h-8.5zM676 264h8.5v8.5h-8.5zM684 264h8.5v8.5h-8.5zM476 272h8.5v8.5h-8.5zM676 272h8.5v8.5h-8.5zM684 272h8.5v8.5h-8.5zM692 272h8.5v8.5h-8.5zM700 272h8.5v8.5h-8.5zM460 280h8.5v8.5h-8.5zM444 288h8.5v8.5h-8.5zM436 296h8.5v8.5h-8.5zM420 304h8.5v8.5h-8.5zM404 320h8.5v8.5h-8.5zM396 328h8.5v8.5h-8.5zM380 336h8.5v8.5h-8.5zM372 344h8.5v8.5h-8.5zM364 352h8.5v8.5h-8.5zM348 368h8.5v8.5h-8.5zM340 376h8.5v8.5h-8.5zM324 384h8.5v8.5h-8.5zM332 384h8.5v8.5h-8.5zM316 392h8.5v8.5h-8.5zM300 400h8.5v8.5h-8.5z"/>
<path fill="#867e02" d="M604 216h8.5v8.5h-8.5zM612 216h8.5v8.5h-8.5zM620 216h8.5v8.5h-8.5zM628 216h8.5v8.5h-8.5zM636 216h8.5v8.5h-8.5zM644 216h8.5v8.5h-8.5zM652 216h8.5v8.5h-8.5zM572 224h8.5v8.5h-8.5zM580 224h8.5v8.5h-8.5zM588 224h8.5v8.5h-8.5zM652 224h8.5v8.5h-8.5zM660 224h8.5v8.5h-8.5zM668 224h8.5v8.5h-8.5zM524 232h8.5v8.5h-8.5zM532 232h8.5v8.5h-8.5zM540 232h8.5v8.5h-8.5zM668 232h8.5v8.5h-8.5zM676 232h8.5v8.5h-8.5zM684 232h8.5v8.5h-8.5zM516 240h8.5v8.5h-8.5zM676 240h8.5v8.5h-8.5zM684 240h8.5v8.5h-8.5zM692 240h8.5v8.5h-8.5zM508 248h8.5v8.5h-8.5zM684 248h8.5v8.5h-8.5zM692 248h8.5v8.5h-8.5zM700 248h8.5v8.5h-8.5zM708 248h8.5v8.5h-8.5zM492 256h8.5v8.5h-8.5zM684 256h8.5v8.5h-8.5zM692 256h8.5v8.5h-8.5zM700 256h8.5v8.5h-8.5zM708 256h8.5v8.5h-8.5zM716 256h8.5v8.5h-8.5zM724 256h8.5v8.5h-8.5zM812 256h8.5v8.5h-8.5zM484 264h8.5v8.5h-8.5zM692 264h8.5v8.5h-8.5zM700 264h8.5v8.5h-8.5zM708 264h8.5v8.5h-8.5zM716 264h8.5v8.5h-8.5zM724 264h8.5v8.5h-8.5zM732 264h8.5v8.5h-8.5zM740 264h8.5v8.5h-8.5zM748 264h8.5v8.5h-8.5zM756 264h8.5v8.5h-8.5zM764 264h8.5v8.5h-8.5zM468 272h8.5v8.5h-8.5zM708 272h8.5v8.5h-8.5zM716 272h8.5v8.5h-8.5zM452 280h8.5v8.5h-8.5zM436 288h8.5v8.5h-8.5zM428 296h8.5v8.5h-8.5zM412 312h8.5v8.5h-8.5zM396 320h8.5v8.5h-8.5zM388 328h8.5v8.5h-8.5zM356 360h8.5v8.5h-8.5zM340 368h8.5v8.5h-8.5zM332 376h8.5v8.5h-8.5zM316 384h8.5v8.5h-8.5zM308 392h8.5v8.5h-8.5z"/>
<path fill="#868202" d="M612 208h8.5v8.5h-8.5zM620 208h8.5v8.5h-8.5zM628 208h8.5v8.5h-8.5zM636 208h8.5v8.5h-8.5zM644 208h8.5v8.5h-8.5zM652 208h8.5v8.5h-8.5zM660 208h8.5v8.5h-8.5zM588 216h8.5v8.5h-8.5zM596 216h8.5v8.5h-8.5zM660 216h8.5v8.5h-8.5zM668 216h8.5v8.5h-8.5zM676 216h8.5v8.5h-8.5zM684 216h8.5v8.5h-8.5zM540 224h8.5v8.5h-8.5zM548 224h8.5v8.5h-8.5zM556 224h8.5v8.5h-8.5zM564 224h8.5v8.5h-8.5zM676 224h8.5v8.5h-8.5zM684 224h8.5v8.5h-8.5zM692 224h8.5v8.5h-8.5zM700 224h8.5v8.5h-8.5zM708 224h8.5v8.5h-8.5zM516 232h8.5v8.5h-8.5zM692 232h8.5v8.5h-8.5zM700 232h8.5v8.5h-8.5zM708 232h8.5v8.5h-8.5zM716 232h8.5v8.5h-8.5zM724 232h8.5v8.5h-8.5zM508 240h8.5v8.5h-8.5zM700 240h8.5v8.5h-8.5zM708 240h8.5v8.5h-8.5zM716 240h8.5v8.5h-8.5zM724 240h8.5v8.5h-8.5zM732 240h8.5v8.5h-8.5zM740 240h8.5v8.5h-8.5zM500 248h8.5v8.5h-8.5zM716 248h8.5v8.5h-8.5zM724 248h8.5v8.5h-8.5zM732 248h8.5v8.5h-8.5zM740 248h8.5v8.5h-8.5zM748 248h8.5v8.5h-8.5zM756 248h8.5v8.5h-8.5zM764 248h8.5v8.5h-8.5zM772 248h8.5v8.5h-8.5zM780 248h8.5v8.5h-8.5zM788 248h8.5v8.5h-8.5zM796 248h8.5v8.5h-8.5zM804 248h8.5v8.5h-8.5zM812 248h8.5v8.5h-8.5zM820 248h8.5v8.5h-8.5zM828 248h8.5v8.5h-8.5zM836 248h8.5v8.5h-8.5zM844 248h8.5v8.5h-8.5zM484 256h8.5v8.5h-8.5zM732 256h8.5v8.5h-8.5zM740 256h8.5v8.5h-8.5zM748 256h8.5v8.5h-8.5zM756 256h8.5v8.5h-8.5zM764 256h8.5v8.5h-8.5zM772 256h8.5v8.5h-8.5zM780 256h8.5v8.5h-8.5zM788 256h8.5v8.5h-8.5zM796 256h8.5v8.5h-8.5zM804 256h8.5v8.5h-8.5zM820 256h8.5v8.5h-8.5zM476 264h8.5v8.5h-8.5zM460 272h8.5v8.5h-8.5zM444 280h8.5v8.5h-8.5zM428 288h8.5v8.5h-8.5zM420 296h8.5v8.5h-8.5zM412 304h8.5v8.5h-8.5zM404 312h8.5v8.5h-8.5zM380 328h8.5v8.5h-8.5zM372 336h8.5v8.5h-8.5zM364 344h8.5v8.5h-8.5zM356 352h8.5v8.5h-8.5zM348 360h8.5v8.5h-8.5zM332 368h8.5v8.5h-8.5zM324 376h8.5v8.5h-8.5zM308 384h8.5v8.5h-8.5zM300 392h8.5v8.5h-8.5z"/>
<path fill="#868602" d="M612 200h8.5v8.5h-8.5zM620 200h8.5v8.5h-8.5zM628 200h8.5v8.5h-8.5zM636 200h8.5v8.5h-8.5zM644 200h8.5v8.5h-8.5zM652 200h8.5v8.5h-8.5zM660 200h8.5v8.5h-8.5zM668 200h8.5v8.5h-8.5zM596 208h8.5v8.5h-8.5zM604 208h8.5v8.5h-8.5zM668 208h8.5v8.5h-8.5zM676 208h8.5v8.5h-8.5zM684 208h8.5v8.5h-8.5zM692 208h8.5v8.5h-8.5zM700 208h8.5v8.5h-8.5zM564 216h8.5v8.5h-8.5zM572 216h8.5v8.5h-8.5zM580 216h8.5v8.5h-8.5zM692 216h8.5v8.5h-8.5zM700 216h8.5v8.5h-8.5zM708 216h8.5v8.5h-8.5zM716 216h8.5v8.5h-8.5zM724 216h8.5v8.5h-8.5zM524 224h8.5v8.5h-8.5zM532 224h8.5v8.5h-8.5zM716 224h8.5v8.5h-8.5zM724 224h8.5v8.5h-8.5zM732 224h8.5v8.5h-8.5zM740 224h8.5v8.5h-8.5zM748 224h8.5v8.5h-8.5zM508 232h8.5v8.5h-8.5zM732 232h8.5v8.5h-8.5zM740 232h8.5v8.5h-8.5zM748 232h8.5v8.5h-8.5zM756 232h8.5v8.5h-8.5zM764 232h8.5v8.5h-8.5zM772 232h8.5v8.5h-8.5zM780 232h8.5v8.5h-8.5zM788 232h8.5v8.5h-8.5zM796 232h8.5v8.5h-8.5zM804 232h8.5v8.5h-8.5zM812 232h8.5v8.5h-8.5zM820 232h8.5v8.5h-8.5zM828 232h8.5v8.5h-8.5zM500 240h8.5v8.5h-8.5zM748 240h8.5v8.5h-8.5zM756 240h8.5v8.5h-8.5zM764 240h8.5v8.5h-8.5zM772 240h8.5v8.5h-8.5zM780 240h8.5v8.5h-8.5zM788 240h8.5v8.5h-8.5zM796 240h8.5v8.5h-8.5zM804 240h8.5v8.5h-8.5zM812 240h8.5v8.5h-8.5zM820 240h8.5v8.5h-8.5zM828 240h8.5v8.5h-8.5zM836 240h8.5v8.5h-8.5zM844 240h8.5v8.5h-8.5zM852 240h8.5v8.5h-8.5zM492 248h8.5v8.5h-8.5zM852 248h8.5v8.5h-8.5zM476 256h8.5v8.5h-8.5zM468 264h8.5v8.5h-8.5zM452 272h8.5v8.5h-8.5zM436 280h8.5v8.5h-8.5zM396 312h8.5v8.5h-8.5zM388 320h8.5v8.5h-8.5zM372 328h8.5v8.5h-8.5zM364 336h8.5v8.5h-8.5zM356 344h8.5v8.5h-8.5zM348 352h8.5v8.5h-8.5zM340 360h8.5v8.5h-8.5zM324 368h8.5v8.5h-8.5zM316 376h8.5v8.5h-8.5zM300 384h8.5v8.5h-8.5z"/>
<path fill="#828602" d="M620 192h8.5v8.5h-8.5zM628 192h8.5v8.5h-8.5zM636 192h8.5v8.5h-8.5zM644 192h8.5v8.5h-8.5zM652 192h8.5v8.5h-8.5zM660 192h8.5v8.5h-8.5zM604 200h8.5v8.5h-8.5zM676 200h8.5v8.5h-8.5zM684 200h8.5v8.5h-8.5zM692 200h8.5v8.5h-8.5zM700 200h8.5v8.5h-8.5zM580 208h8.5v8.5h-8.5zM588 208h8.5v8.5h-8.5zM708 208h8.5v8.5h-8.5zM716 208h8.5v8.5h-8.5zM724 208h8.5v8.5h-8.5zM732 208h8.5v8.5h-8.5zM540 216h8.5v8.5h-8.5zM548 216h8.5v8.5h-8.5zM556 216h8.5v8.5h-8.5zM732 216h8.5v8.5h-8.5zM740 216h8.5v8.5h-8.5zM748 216h8.5v8.5h-8.5zM756 216h8.5v8.5h-8.5zM764 216h8.5v8.5h-8.5zM772 216h8.5v8.5h-8.5zM780 216h8.5v8.5h-8.5zM788 216h8.5v8.5h-8.5zM516 224h8.5v8.5h-8.5zM756 224h8.5v8.5h-8.5zM764 224h8.5v8.5h-8.5zM772 224h8.5v8.5h-8.5zM780 224h8.5v8.5h-8.5zM788 224h8.5v8.5h-8.5zM796 224h8.5v8.5h-8.5zM804 224h8.5v8.5h-8.5zM812 224h8.5v8.5h-8.5zM820 224h8.5v8.5h-8.5zM828 224h8.5v8.5h-8.5zM836 224h8.5v8.5h-8.5zM500 232h8.5v8.5h-8.5zM836 232h8.5v8.5h-8.5zM844 232h8.5v8.5h-8.5zM852 232h8.5v8.5h-8.5zM860 232h8.5v8.5h-8.5zM492 240h8.5v8.5h-8.5zM860 240h8.5v8.5h-8.5zM868 240h8.5v8.5h-8.5zM876 240h8.5v8.5h-8.5zM484 248h8.5v8.5h-8.5zM468 256h8.5v8.5h-8.5zM452 264h8.5v8.5h-8.5zM460 264h8.5v8.5h-8.5zM444 272h8.5v8.5h-8.5zM428 280h8.5v8.5h-8.5zM420 288h8.5v8.5h-8.5zM412 296h8.5v8.5h-8.5zM404 304h8.5v8.5h-8.5zM388 312h8.5v8.5h-8.5zM380 320h8.5v8.5h-8.5zM332 360h8.5v8.5h-8.5zM316 368h8.5v8.5h-8.5zM308 376h8.5v8.5h-8.5z"/>
<path fill="#7e8602" d="M612 192h8.5v8.5h-8.5zM668 192h8.5v8.5h-8.5zM676 192h8.5v8.5h-8.5zM684 192h8.5v8.5h-8.5zM692 192h8.5v8.5h-8.5zM700 192h8.5v8.5h-8.5zM708 192h8.5v8.5h-8.5zM596 200h8.5v8.5h-8.5zM708 200h8.5v8.5h-8.5zM716 200h8.5v8.5h-8.5zM724 200h8.5v8.5h-8.5zM732 200h8.5v8.5h-8.5zM740 200h8.5v8.5h-8.5zM572 208h8.5v8.5h-8.5zM740 208h8.5v8.5h-8.5zM748 208h8.5v8.5h-8.5zM756 208h8.5v8.5h-8.5zM764 208h8.5v8.5h-8.5zM772 208h8.5v8.5h-8.5zM780 208h8.5v8.5h-8.5zM788 208h8.5v8.5h-8.5zM796 208h8.5v8.5h-8.5zM804 208h8.5v8.5h-8.5zM516 216h8.5v8.5h-8.5zM524 216h8.5v8.5h-8.5zM532 216h8.5v8.5h-8.5zM796 216h8.5v8.5h-8.5zM804 216h8.5v8.5h-8.5zM812 216h8.5v8.5h-8.5zM820 216h8.5v8.5h-8.5zM828 216h8.5v8.5h-8.5zM836 216h8.5v8.5h-8.5zM844 216h8.5v8.5h-8.5zM508 224h8.5v8.5h-8.5zM844 224h8.5v8.5h-8.5zM852 224h8.5v8.5h-8.5zM860 224h8.5v8.5h-8.5zM868 224h8.5v8.5h-8.5zM916 224h8.5v8.5h-8.5zM924 224h8.5v8.5h-8.5zM932 224h8.5v8.5h-8.5zM868 232h8.5v8.5h-8.5zM876 232h8.5v8.5h-8.5zM884 232h8.5v8.5h-8.5zM892 232h8.5v8.5h-8.5zM900 232h8.5v8.5h-8.5zM908 232h8.5v8.5h-8.5zM484 240h8.5v8.5h-8.5zM476 248h8.5v8.5h-8.5zM460 256h8.5v8.5h-8.5zM444 264h8.5v8.5h-8.5zM436 272h8.5v8.5h-8.5zM412 288h8.5v8.5h-8.5zM404 296h8.5v8.5h-8.5zM396 304h8.5v8.5h-8.5zM372 320h8.5v8.5h-8.5zM364 328h8.5v8.5h-8.5zM356 336h8.5v8.5h-8.5zM348 344h8.5v8.5h-8.5zM340 352h8.5v8.5h-8.5zM324 360h8.5v8.5h-8.5zM308 368h8.5v8.5h-8.5zM300 376h8.5v8.5h-8.5z"/>
<path fill="#798602" d="M620 184h8.5v8.5h-8.5zM628 184h8.5v8.5h-8.5zM636 184h8.5v8.5h-8.5zM644 184h8.5v8.5h-8.5zM652 184h8.5v8.5h-8.5zM660 184h8.5v8.5h-8.5zM668 184h8.5v8.5h-8.5zM676 184h8.5v8.5h-8.5zM684 184h8.5v8.5h-8.5zM692 184h8.5v8.5h-8.5zM700 184h8.5v8.5h-8.5zM604 192h8.5v8.5h-8.5zM716 192h8.5v8.5h-8.5zM724 192h8.5v8.5h-8.5zM732 192h8.5v8.5h-8.5zM740 192h8.5v8.5h-8.5zM748 192h8.5v8.5h-8.5zM580 200h8.5v8.5h-8.5zM588 200h8.5v8.5h-8.5zM748 200h8.5v8.5h-8.5zM756 200h8.5v8.5h-8.5zM764 200h8.5v8.5h-8.5zM772 200h8.5v8.5h-8.5zM780 200h8.5v8.5h-8.5zM788 200h8.5v8.5h-8.5zM796 200h8.5v8.5h-8.5zM548 208h8.5v8.5h-8.5zM556 208h8.5v8.5h-8.5zM564 208h8.5v8.5h-8.5zM812 208h8.5v8.5h-8.5zM820 208h8.5v8.5h-8.5zM828 208h8.5v8.5h-8.5zM836 208h8.5v8.5h-8.5zM844 208h8.5v8.5h-8.5zM972 208h8.5v8.5h-8.5zM980 208h8.5v8.5h-8.5zM508 216h8.5v8.5h-8.5zM852 216h8.5v8.5h-8.5zM860 216h8.5v8.5h-8.5zM868 216h8.5v8.5h-8.5zM876 216h8.5v8.5h-8.5zM884 216h8.5v8.5h-8.5zM916 216h8.5v8.5h-8.5zM924 216h8.5v8.5h-8.5zM932 216h8.5v8.5h-8.5zM940 216h8.5v8.5h-8.5zM948 216h8.5v8.5h-8.5zM956 216h8.5v8.5h-8.5zM500 224h8.5v8.5h-8.5zM876 224h8.5v8.5h-8.5zM884 224h8.5v8.5h-8.5zM892 224h8.5v8.5h-8.5zM900 224h8.5v8.5h-8.5zM908 224h8.5v8.5h-8.5zM492 232h8.5v8.5h-8.5zM468 248h8.5v8.5h-8.5zM452 256h8.5v8.5h-8.5zM428 272h8.5v8.5h-8.5zM420 280h8.5v8.5h-8.5zM380 312h8.5v8.5h-8.5zM332 352h8.5v8.5h-8.5zM316 360h8.5v8.5h-8.5z"/>
<path fill="#758602" d="M636 176h8.5v8.5h-8.5zM644 176h8.5v8.5h-8.5zM652 176h8.5v8.5h-8.5zM660 176h8.5v8.5h-8.5zM668 176h8.5v8.5h-8.5zM676 176h8.5v8.5h-8.5zM684 176h8.5v8.5h-8.5zM692 176h8.5v8.5h-8.5zM604 184h8.5v8.5h-8.5zM612 184h8.5v8.5h-8.5zM708 184h8.5v8.5h-8.5zM716 184h8.5v8.5h-8.5zM724 184h8.5v8.5h-8.5zM732 184h8.5v8.5h-8.5zM740 184h8.5v8.5h-8.5zM748 184h8.5v8.5h-8.5zM596 192h8.5v8.5h-8.5zM756 192h8.5v8.5h-8.5zM764 192h8.5v8.5h-8.5zM772 192h8.5v8.5h-8.5zM780 192h8.5v8.5h-8.5zM572 200h8.5v8.5h-8.5zM804 200h8.5v8.5h-8.5zM812 200h8.5v8.5h-8.5zM820 200h8.5v8.5h-8.5zM828 200h8.5v8.5h-8.5zM836 200h8.5v8.5h-8.5zM844 200h8.5v8.5h-8.5zM852 200h8.5v8.5h-8.5zM972 200h8.5v8.5h-8.5zM980 200h8.5v8.5h-8.5zM988 200h8.5v8.5h-8.5zM996 200h8.5v8.5h-8.5zM1004 200h8.5v8.5h-8.5zM524 208h8.5v8.5h-8.5zM532 208h8.5v8.5h-8.5zM540 208h8.5v8.5h-8.5zM852 208h8.5v8.5h-8.5zM860 208h8.5v8.5h-8.5zM868 208h8.5v8.5h-8.5zM876 208h8.5v8.5h-8.5zM884 208h8.5v8.5h-8.5zM892 208h8.5v8.5h-8.5zM900 208h8.5v8.5h-8.5zM908 208h8.5v8.5h-8.5zM916 208h8.5v8.5h-8.5zM924 208h8.5v8.5h-8.5zM932 208h8.5v8.5h-8.5zM940 208h8.5v8.5h-8.5zM948 208h8.5v8.5h-8.5zM956 208h8.5v8.5h-8.5zM964 208h8.5v8.5h-8.5zM892 216h8.5v8.5h-8.5zM900 216h8.5v8.5h-8.5zM908 216h8.5v8.5h-8.5zM492 224h8.5v8.5h-8.5zM484 232h8.5v8.5h-8.5zM476 240h8.5v8.5h-8.5zM460 248h8.5v8.5h-8.5zM444 256h8.5v8.5h-8.5zM436 264h8.5v8.5h-8.5zM404 288h8.5v8.5h-8.5zM396 296h8.5v8.5h-8.5zM388 304h8.5v8.5h-8.5zM372 312h8.5v8.5h-8.5zM364 320h8.5v8.5h-8.5zM356 328h8.5v8.5h-8.5zM348 336h8.5v8.5h-8.5zM340 344h8.5v8.5h-8.5zM324 352h8.5v8.5h-8.5zM308 360h8.5v8.5h-8.5zM300 368h8.5v8.5h-8.5z"/>
<path fill="#708602" d="M620 176h8.5v8.5h-8.5zM628 176h8.5v8.5h-8.5zM700 176h8.5v8.5h-8.5zM708 176h8.5v8.5h-8.5zM716 176h8.5v8.5h-8.5zM724 176h8.5v8.5h-8.5zM732 176h8.5v8.5h-8.5zM740 176h8.5v8.5h-8.5zM748 176h8.5v8.5h-8.5zM756 184h8.5v8.5h-8.5zM764 184h8.5v8.5h-8.5zM772 184h8.5v8.5h-8.5zM588 192h8.5v8.5h-8.5zM788 192h8.5v8.5h-8.5zM796 192h8.5v8.5h-8.5zM804 192h8.5v8.5h-8.5zM812 192h8.5v8.5h-8.5zM820 192h8.5v8.5h-8.5zM828 192h8.5v8.5h-8.5zM836 192h8.5v8.5h-8.5zM844 192h8.5v8.5h-8.5zM852 192h8.5v8.5h-8.5zM988 192h8.5v8.5h-8.5zM996 192h8.5v8.5h-8.5zM1004 192h8.5v8.5h-8.5zM1012 192h8.5v8.5h-8.5zM556 200h8.5v8.5h-8.5zM564 200h8.5v8.5h-8.5zM860 200h8.5v8.5h-8.5zM868 200h8.5v8.5h-8.5zM876 200h8.5v8.5h-8.5zM884 200h8.5v8.5h-8.5zM892 200h8.5v8.5h-8.5zM900 200h8.5v8.5h-8.5zM908 200h8.5v8.5h-8.5zM916 200h8.5v8.5h-8.5zM924 200h8.5v8.5h-8.5zM932 200h8.5v8.5h-8.5zM940 200h8.5v8.5h-8.5zM948 200h8.5v8.5h-8.5zM956 200h8.5v8.5h-8.5zM964 200h8.5v8.5h-8.5zM516 208h8.5v8.5h-8.5zM500 216h8.5v8.5h-8.5zM476 232h8.5v8.5h-8.5zM468 240h8.5v8.5h-8.5zM452 248h8.5v8.5h-8.5zM428 264h8.5v8.5h-8.5zM420 272h8.5v8.5h-8.5zM412 280h8.5v8.5h-8.5zM380 304h8.5v8.5h-8.5zM332 344h8.5v8.5h-8.5zM316 352h8.5v8.5h-8.5z"/>
<path fill="#6c8602" d="M636 168h8.5v8.5h-8.5zM644 168h8.5v8.5h-8.5zM652 168h8.5v8.5h-8.5zM660 168h8.5v8.5h-8.5zM668 168h8.5v8.5h-8.5zM676 168h8.5v8.5h-8.5zM684 168h8.5v8.5h-8.5zM692 168h8.5v8.5h-8.5zM700 168h8.5v8.5h-8.5zM708 168h8.5v8.5h-8.5zM716 168h8.5v8.5h-8.5zM724 168h8.5v8.5h-8.5zM732 168h8.5v8.5h-8.5zM740 168h8.5v8.5h-8.5zM748 168h8.5v8.5h-8.5zM612 176h8.5v8.5h-8.5zM756 176h8.5v8.5h-8.5zM764 176h8.5v8.5h-8.5zM772 176h8.5v8.5h-8.5zM596 184h8.5v8.5h-8.5zM780 184h8.5v8.5h-8.5zM788 184h8.5v8.5h-8.5zM796 184h8.5v8.5h-8.5zM804 184h8.5v8.5h-8.5zM812 184h8.5v8.5h-8.5zM820 184h8.5v8.5h-8.5zM828 184h8.5v8.5h-8.5zM836 184h8.5v8.5h-8.5zM844 184h8.5v8.5h-8.5zM580 192h8.5v8.5h-8.5zM860 192h8.5v8.5h-8.5zM868 192h8.5v8.5h-8.5zM876 192h8.5v8.5h-8.5zM884 192h8.5v8.5h-8.5zM892 192h8.5v8.5h-8.5zM900 192h8.5v8.5h-8.5zM908 192h8.5v8.5h-8.5zM916 192h8.5v8.5h-8.5zM924 192h8.5v8.5h-8.5zM932 192h8.5v8.5h-8.5zM940 192h8.5v8.5h-8.5zM948 192h8.5v8.5h-8.5zM956 192h8.5v8.5h-8.5zM964 192h8.5v8.5h-8.5zM972 192h8.5v8.5h-8.5zM980 192h8.5v8.5h-8.5zM1020 192h8.5v8.5h-8.5zM540 200h8.5v8.5h-8.5zM548 200h8.5v8.5h-8.5zM508 208h8.5v8.5h-8.5zM492 216h8.5v8.5h-8.5zM484 224h8.5v8.5h-8.5zM460 240h8.5v8.5h-8.5zM444 248h8.5v8.5h-8.5zM436 256h8.5v8.5h-8.5zM396 288h8.5v8.5h-8.5zM388 296h8.5v8.5h-8.5zM348 328h8.5v8.5h-8.5zM340 336h8.5v8.5h-8.5zM300 360h8.5v8.5h-8.5z"/>
<path fill="#678602" d="M724 160h8.5v8.5h-8.5zM732 160h8.5v8.5h-8.5zM740 160h8.5v8.5h-8.5zM748 160h8.5v8.5h-8.5zM620 168h8.5v8.5h-8.5zM628 168h8.5v8.5h-8.5zM756 168h8.5v8.5h-8.5zM764 168h8.5v8.5h-8.5zM772 168h8.5v8.5h-8.5zM604 176h8.5v8.5h-8.5zM780 176h8.5v8.5h-8.5zM788 176h8.5v8.5h-8.5zM796 176h8.5v8.5h-8.5zM804 176h8.5v8.5h-8.5zM812 176h8.5v8.5h-8.5zM820 176h8.5v8.5h-8.5zM828 176h8.5v8.5h-8.5zM836 176h8.5v8.5h-8.5zM844 176h8.5v8.5h-8.5zM588 184h8.5v8.5h-8.5zM852 184h8.5v8.5h-8.5zM860 184h8.5v8.5h-8.5zM868 184h8.5v8.5h-8.5zM876 184h8.5v8.5h-8.5zM884 184h8.5v8.5h-8.5zM892 184h8.5v8.5h-8.5zM900 184h8.5v8.5h-8.5zM908 184h8.5v8.5h-8.5zM916 184h8.5v8.5h-8.5zM924 184h8.5v8.5h-8.5zM932 184h8.5v8.5h-8.5zM940 184h8.5v8.5h-8.5zM948 184h8.5v8.5h-8.5zM956 184h8.5v8.5h-8.5zM964 184h8.5v8.5h-8.5zM972 184h8.5v8.5h-8.5zM980 184h8.5v8.5h-8.5zM988 184h8.5v8.5h-8.5zM996 184h8.5v8.5h-8.5zM1004 184h8.5v8.5h-8.5zM1012 184h8.5v8.5h-8.5zM1020 184h8.5v8.5h-8.5zM564 192h8.5v8.5h-8.5zM572 192h8.5v8.5h-8.5zM524 200h8.5v8.5h-8.5zM532 200h8.5v8.5h-8.5zM500 208h8.5v8.5h-8.5zM476 224h8.5v8.5h-8.5zM468 232h8.5v8.5h-8.5zM452 240h8.5v8.5h-8.5zM428 256h8.5v8.5h-8.5zM420 264h8.5v8.5h-8.5zM412 272h8.5v8.5h-8.5zM404 280h8.5v8.5h-8.5zM372 304h8.5v8.5h-8.5zM364 312h8.5v8.5h-8.5zM356 320h8.5v8.5h-8.5zM324 344h8.5v8.5h-8.5zM308 352h8.5v8.5h-8.5z"/>
<path fill="#638602" d="M732 152h8.5v8.5h-8.5zM740 152h8.5v8.5h-8.5zM748 152h8.5v8.5h-8.5zM756 152h8.5v8.5h-8.5zM644 160h8.5v8.5h-8.5zM652 160h8.5v8.5h-8.5zM660 160h8.5v8.5h-8.5zM668 160h8.5v8.5h-8.5zM676 160h8.5v8.5h-8.5zM684 160h8.5v8.5h-8.5zM692 160h8.5v8.5h-8.5zM700 160h8.5v8.5h-8.5zM708 160h8.5v8.5h-8.5zM716 160h8.5v8.5h-8.5zM756 160h8.5v8.5h-8.5zM764 160h8.5v8.5h-8.5zM772 160h8.5v8.5h-8.5zM612 168h8.5v8.5h-8.5zM780 168h8.5v8.5h-8.5zM788 168h8.5v8.5h-8.5zM596 176h8.5v8.5h-8.5zM852 176h8.5v8.5h-8.5zM860 176h8.5v8.5h-8.5zM868 176h8.5v8.5h-8.5zM876 176h8.5v8.5h-8.5zM884 176h8.5v8.5h-8.5zM940 176h8.5v8.5h-8.5zM948 176h8.5v8.5h-8.5zM956 176h8.5v8.5h-8.5zM964 176h8.5v8.5h-8.5zM972 176h8.5v8.5h-8.5zM980 176h8.5v8.5h-8.5zM988 176h8.5v8.5h-8.5zM996 176h8.5v8.5h-8.5zM1004 176h8.5v8.5h-8.5zM1012 176h8.5v8.5h-8.5zM580 184h8.5v8.5h-8.5zM1028 184h8.5v8.5h-8.5zM556 192h8.5v8.5h-8.5zM508 200h8.5v8.5h-8.5zM516 200h8.5v8.5h-8.5zM492 208h8.5v8.5h-8.5zM484 216h8.5v8.5h-8.5zM468 224h8.5v8.5h-8.5zM460 232h8.5v8.5h-8.5zM444 240h8.5v8.5h-8.5zM436 248h8.5v8.5h-8.5zM388 288h8.5v8.5h-8.5zM380 296h8.5v8.5h-8.5zM332 336h8.5v8.5h-8.5zM316 344h8.5v8.5h-8.5zM300 352h8.5v8.5h-8.5z"/>
<path fill="#5f8602" d="M740 144h8.5v8.5h-8.5zM748 144h8.5v8.5h-8.5zM684 152h8.5v8.5h-8.5zM692 152h8.5v8.5h-8.5zM700 152h8.5v8.5h-8.5zM708 152h8.5v8.5h-8.5zM716 152h8.5v8.5h-8.5zM724 152h8.5v8.5h-8.5zM764 152h8.5v8.5h-8.5zM772 152h8.5v8.5h-8.5zM628 160h8.5v8.5h-8.5zM636 160h8.5v8.5h-8.5zM780 160h8.5v8.5h-8.5zM788 160h8.5v8.5h-8.5zM604 168h8.5v8.5h-8.5zM796 168h8.5v8.5h-8.5zM804 168h8.5v8.5h-8.5zM812 168h8.5v8.5h-8.5zM820 168h8.5v8.5h-8.5zM828 168h8.5v8.5h-8.5zM836 168h8.5v8.5h-8.5zM844 168h8.5v8.5h-8.5zM852 168h8.5v8.5h-8.5zM860 168h8.5v8.5h-8.5zM868 168h8.5v8.5h-8.5zM980 168h8.5v8.5h-8.5zM988 168h8.5v8.5h-8.5zM996 168h8.5v8.5h-8.5zM1004 168h8.5v8.5h-8.5zM892 176h8.5v8.5h-8.5zM900 176h8.5v8.5h-8.5zM908 176h8.5v8.5h-8.5zM916 176h8.5v8.5h-8.5zM924 176h8.5v8.5h-8.5zM932 176h8.5v8.5h-8.5zM1020 176h8.5v8.5h-8.5zM1028 176h8.5v8.5h-8.5zM572 184h8.5v8.5h-8.5zM1036 184h8.5v8.5h-8.5zM532 192h8.5v8.5h-8.5zM540 192h8.5v8.5h-8.5zM548 192h8.5v8.5h-8.5zM476 216h8.5v8.5h-8.5zM452 232h8.5v8.5h-8.5zM428 248h8.5v8.5h-8.5zM420 256h8.5v8.5h-8.5zM412 264h8.5v8.5h-8.5zM404 272h8.5v8.5h-8.5zM396 280h8.5v8.5h-8.5zM364 304h8.5v8.5h-8.5zM356 312h8.5v8.5h-8.5zM348 320h8.5v8.5h-8.5zM340 328h8.5v8.5h-8.5zM324 336h8.5v8.5h-8.5zM308 344h8.5v8.5h-8.5z"/>
<path fill="#5a8602" d="M724 144h8.5v8.5h-8.5zM732 144h8.5v8.5h-8.5zM756 144h8.5v8.5h-8.5zM764 144h8.5v8.5h-8.5zM772 144h8.5v8.5h-8.5zM644 152h8.5v8.5h-8.5zM652 152h8.5v8.5h-8.5zM660 152h8.5v8.5h-8.5zM668 152h8.5v8.5h-8.5zM676 152h8.5v8.5h-8.5zM780 152h8.5v8.5h-8.5zM620 160h8.5v8.5h-8.5zM796 160h8.5v8.5h-8.5zM804 160h8.5v8.5h-8.5zM812 160h8.5v8.5h-8.5zM820 160h8.5v8.5h-8.5zM828 160h8.5v8.5h-8.5zM836 160h8.5v8.5h-8.5zM844 160h8.5v8.5h-8.5zM852 160h8.5v8.5h-8.5zM860 160h8.5v8.5h-8.5zM876 168h8.5v8.5h-8.5zM884 168h8.5v8.5h-8.5zM892 168h8.5v8.5h-8.5zM900 168h8.5v8.5h-8.5zM908 168h8.5v8.5h-8.5zM916 168h8.5v8.5h-8.5zM924 168h8.5v8.5h-8.5zM932 168h8.5v8.5h-8.5zM940 168h8.5v8.5h-8.5zM948 168h8.5v8.5h-8.5zM956 168h8.5v8.5h-8.5zM964 168h8.5v8.5h-8.5zM972 168h8.5v8.5h-8.5zM1012 168h8.5v8.5h-8.5zM1020 168h8.5v8.5h-8.5zM588 176h8.5v8.5h-8.5zM564 184h8.5v8.5h-8.5zM524 192h8.5v8.5h-8.5zM500 200h8.5v8.5h-8.5zM484 208h8.5v8.5h-8.5zM460 224h8.5v8.5h-8.5zM436 240h8.5v8.5h-8.5zM380 288h8.5v8.5h-8.5zM372 296h8.5v8.5h-8.5zM316 336h8.5v8.5h-8.5zM300 344h8.5v8.5h-8.5z"/>
<path fill="#568602" d="M732 136h8.5v8.5h-8.5zM740 136h8.5v8.5h-8.5zM748 136h8.5v8.5h-8.5zM756 136h8.5v8.5h-8.5zM764 136h8.5v8.5h-8.5zM668 144h8.5v8.5h-8.5zM676 144h8.5v8.5h-8.5zM684 144h8.5v8.5h-8.5zM692 144h8.5v8.5h-8.5zM700 144h8.5v8.5h-8.5zM708 144h8.5v8.5h-8.5zM716 144h8.5v8.5h-8.5zM780 144h8.5v8.5h-8.5zM628 152h8.5v8.5h-8.5zM636 152h8.5v8.5h-8.5zM788 152h8.5v8.5h-8.5zM796 152h8.5v8.5h-8.5zM804 152h8.5v8.5h-8.5zM812 152h8.5v8.5h-8.5zM820 152h8.5v8.5h-8.5zM828 152h8.5v8.5h-8.5zM836 152h8.5v8.5h-8.5zM844 152h8.5v8.5h-8.5zM852 152h8.5v8.5h-8.5zM612 160h8.5v8.5h-8.5zM868 160h8.5v8.5h-8.5zM876 160h8.5v8.5h-8.5zM884 160h8.5v8.5h-8.5zM892 160h8.5v8.5h-8.5zM900 160h8.5v8.5h-8.5zM908 160h8.5v8.5h-8.5zM916 160h8.5v8.5h-8.5zM924 160h8.5v8.5h-8.5zM932 160h8.5v8.5h-8.5zM940 160h8.5v8.5h-8.5zM948 160h8.5v8.5h-8.5zM956 160h8.5v8.5h-8.5zM964 160h8.5v8.5h-8.5zM972 160h8.5v8.5h-8.5zM980 160h8.5v8.5h-8.5zM988 160h8.5v8.5h-8.5zM996 160h8.5v8.5h-8.5zM1004 160h8.5v8.5h-8.5zM1012 160h8.5v8.5h-8.5zM596 168h8.5v8.5h-8.5zM1028 168h8.5v8.5h-8.5zM580 176h8.5v8.5h-8.5zM1036 176h8.5v8.5h-8.5zM548 184h8.5v8.5h-8.5zM556 184h8.5v8.5h-8.5zM508 192h8.5v8.5h-8.5zM516 192h8.5v8.5h-8.5zM492 200h8.5v8.5h-8.5zM476 208h8.5v8.5h-8.5zM468 216h8.5v8.5h-8.5zM452 224h8.5v8.5h-8.5zM444 232h8.5v8.5h-8.5zM428 240h8.5v8.5h-8.5zM420 248h8.5v8.5h-8.5zM412 256h8.5v8.5h-8.5zM404 264h8.5v8.5h-8.5zM396 272h8.5v8.5h-8.5zM388 280h8.5v8.5h-8.5zM340 320h8.5v8.5h-8.5zM332 328h8.5v8.5h-8.5z"/>
<path fill="#518602" d="M740 128h8.5v8.5h-8.5zM748 128h8.5v8.5h-8.5zM756 128h8.5v8.5h-8.5zM716 136h8.5v8.5h-8.5zM724 136h8.5v8.5h-8.5zM772 136h8.5v8.5h-8.5zM780 136h8.5v8.5h-8.5zM644 144h8.5v8.5h-8.5zM652 144h8.5v8.5h-8.5zM660 144h8.5v8.5h-8.5zM788 144h8.5v8.5h-8.5zM796 144h8.5v8.5h-8.5zM804 144h8.5v8.5h-8.5zM812 144h8.5v8.5h-8.5zM820 144h8.5v8.5h-8.5zM828 144h8.5v8.5h-8.5zM836 144h8.5v8.5h-8.5zM620 152h8.5v8.5h-8.5zM860 152h8.5v8.5h-8.5zM868 152h8.5v8.5h-8.5zM876 152h8.5v8.5h-8.5zM604 160h8.5v8.5h-8.5zM1020 160h8.5v8.5h-8.5zM588 168h8.5v8.5h-8.5zM572 176h8.5v8.5h-8.5zM532 184h8.5v8.5h-8.5zM540 184h8.5v8.5h-8.5zM500 192h8.5v8.5h-8.5zM484 200h8.5v8.5h-8.5zM460 216h8.5v8.5h-8.5zM436 232h8.5v8.5h-8.5zM372 288h8.5v8.5h-8.5zM364 296h8.5v8.5h-8.5zM356 304h8.5v8.5h-8.5zM348 312h8.5v8.5h-8.5zM324 328h8.5v8.5h-8.5zM300 336h8.5v8.5h-8.5zM308 336h8.5v8.5h-8.5z"/>
<path fill="#4d8602" d="M724 128h8.5v8.5h-8.5zM732 128h8.5v8.5h-8.5zM764 128h8.5v8.5h-8.5zM772 128h8.5v8.5h-8.5zM660 136h8.5v8.5h-8.5zM668 136h8.5v8.5h-8.5zM676 136h8.5v8.5h-8.5zM684 136h8.5v8.5h-8.5zM692 136h8.5v8.5h-8.5zM700 136h8.5v8.5h-8.5zM708 136h8.5v8.5h-8.5zM788 136h8.5v8.5h-8.5zM796 136h8.5v8.5h-8.5zM636 144h8.5v8.5h-8.5zM844 144h8.5v8.5h-8.5zM852 144h8.5v8.5h-8.5zM860 144h8.5v8.5h-8.5zM868 144h8.5v8.5h-8.5zM612 152h8.5v8.5h-8.5zM884 152h8.5v8.5h-8.5zM892 152h8.5v8.5h-8.5zM900 152h8.5v8.5h-8.5zM908 152h8.5v8.5h-8.5zM916 152h8.5v8.5h-8.5zM924 152h8.5v8.5h-8.5zM932 152h8.5v8.5h-8.5zM940 152h8.5v8.5h-8.5zM948 152h8.5v8.5h-8.5zM956 152h8.5v8.5h-8.5zM964 152h8.5v8.5h-8.5zM972 152h8.5v8.5h-8.5zM980 152h8.5v8.5h-8.5zM988 152h8.5v8.5h-8.5zM996 152h8.5v8.5h-8.5zM1004 152h8.5v8.5h-8.5zM596 160h8.5v8.5h-8.5zM1036 168h8.5v8.5h-8.5zM564 176h8.5v8.5h-8.5zM524 184h8.5v8.5h-8.5zM444 224h8.5v8.5h-8.5zM420 240h8.5v8.5h-8.5zM412 248h8.5v8.5h-8.5zM404 256h8.5v8.5h-8.5zM388 272h8.5v8.5h-8.5zM380 280h8.5v8.5h-8.5zM332 320h8.5v8.5h-8.5zM316 328h8.5v8.5h-8.5z"/>
<path fill="#498602" d="M740 120h8.5v8.5h-8.5zM748 120h8.5v8.5h-8.5zM756 120h8.5v8.5h-8.5zM684 128h8.5v8.5h-8.5zM692 128h8.5v8.5h-8.5zM700 128h8.5v8.5h-8.5zM708 128h8.5v8.5h-8.5zM716 128h8.5v8.5h-8.5zM780 128h8.5v8.5h-8.5zM788 128h8.5v8.5h-8.5zM644 136h8.5v8.5h-8.5zM652 136h8.5v8.5h-8.5zM804 136h8.5v8.5h-8.5zM812 136h8.5v8.5h-8.5zM820 136h8.5v8.5h-8.5zM828 136h8.5v8.5h-8.5zM836 136h8.5v8.5h-8.5zM844 136h8.5v8.5h-8.5zM852 136h8.5v8.5h-8.5zM628 144h8.5v8.5h-8.5zM876 144h8.5v8.5h-8.5zM884 144h8.5v8.5h-8.5zM892 144h8.5v8.5h-8.5zM900 144h8.5v8.5h-8.5zM908 144h8.5v8.5h-8.5zM916 144h8.5v8.5h-8.5zM924 144h8.5v8.5h-8.5zM932 144h8.5v8.5h-8.5zM940 144h8.5v8.5h-8.5zM948 144h8.5v8.5h-8.5zM1012 152h8.5v8.5h-8.5zM1028 160h8.5v8.5h-8.5zM580 168h8.5v8.5h-8.5zM548 176h8.5v8.5h-8.5zM556 176h8.5v8.5h-8.5zM508 184h8.5v8.5h-8.5zM516 184h8.5v8.5h-8.5zM492 192h8.5v8.5h-8.5zM436 224h8.5v8.5h-8.5zM428 232h8.5v8.5h-8.5zM396 264h8.5v8.5h-8.5zM364 288h8.5v8.5h-8.5zM356 296h8.5v8.5h-8.5zM348 304h8.5v8.5h-8.5zM340 312h8.5v8.5h-8.5zM308 328h8.5v8.5h-8.5z"/>
<path fill="#448602" d="M708 120h8.5v8.5h-8.5zM716 120h8.5v8.5h-8.5zM724 120h8.5v8.5h-8.5zM732 120h8.5v8.5h-8.5zM764 120h8.5v8.5h-8.5zM772 120h8.5v8.5h-8.5zM660 128h8.5v8.5h-8.5zM668 128h8.5v8.5h-8.5zM676 128h8.5v8.5h-8.5zM796 128h8.5v8.5h-8.5zM804 128h8.5v8.5h-8.5zM812 128h8.5v8.5h-8.5zM820 128h8.5v8.5h-8.5zM636 136h8.5v8.5h-8.5zM860 136h8.5v8.5h-8.5zM868 136h8.5v8.5h-8.5zM876 136h8.5v8.5h-8.5zM620 144h8.5v8.5h-8.5zM956 144h8.5v8.5h-8.5zM964 144h8.5v8.5h-8.5zM972 144h8.5v8.5h-8.5zM980 144h8.5v8.5h-8.5zM988 144h8.5v8.5h-8.5zM996 144h8.5v8.5h-8.5zM604 152h8.5v8.5h-8.5zM1020 152h8.5v8.5h-8.5zM588 160h8.5v8.5h-8.5zM1036 160h8.5v8.5h-8.5zM572 168h8.5v8.5h-8.5zM532 176h8.5v8.5h-8.5zM540 176h8.5v8.5h-8.5zM500 184h8.5v8.5h-8.5zM412 240h8.5v8.5h-8.5zM380 272h8.5v8.5h-8.5zM372 280h8.5v8.5h-8.5zM324 320h8.5v8.5h-8.5zM300 328h8.5v8.5h-8.5z"/>
<path fill="#408602" d="M668 120h8.5v8.5h-8.5zM676 120h8.5v8.5h-8.5zM684 120h8.5v8.5h-8.5zM692 120h8.5v8.5h-8.5zM700 120h8.5v8.5h-8.5zM780 120h8.5v8.5h-8.5zM788 120h8.5v8.5h-8.5zM796 120h8.5v8.5h-8.5zM644 128h8.5v8.5h-8.5zM652 128h8.5v8.5h-8.5zM828 128h8.5v8.5h-8.5zM836 128h8.5v8.5h-8.5zM844 128h8.5v8.5h-8.5zM852 128h8.5v8.5h-8.5zM628 136h8.5v8.5h-8.5zM884 136h8.5v8.5h-8.5zM892 136h8.5v8.5h-8.5zM900 136h8.5v8.5h-8.5zM908 136h8.5v8.5h-8.5zM916 136h8.5v8.5h-8.5zM924 136h8.5v8.5h-8.5zM932 136h8.5v8.5h-8.5zM940 136h8.5v8.5h-8.5zM948 136h8.5v8.5h-8.5zM956 136h8.5v8.5h-8.5zM612 144h8.5v8.5h-8.5zM1004 144h8.5v8.5h-8.5zM596 152h8.5v8.5h-8.5zM1028 152h8.5v8.5h-8.5zM580 160h8.5v8.5h-8.5zM564 168h8.5v8.5h-8.5zM524 176h8.5v8.5h-8.5zM420 232h8.5v8.5h-8.5zM404 248h8.5v8.5h-8.5zM396 256h8.5v8.5h-8.5zM388 264h8.5v8.5h-8.5zM356 288h8.5v8.5h-8.5zM348 296h8.5v8.5h-8.5zM340 304h8.5v8.5h-8.5zM332 312h8.5v8.5h-8.5zM308 320h8.5v8.5h-8.5zM316 320h8.5v8.5h-8.5z"/>
<path fill="#3b8602" d="M692 112h8.5v8.5h-8.5zM700 112h8.5v8.5h-8.5zM708 112h8.5v8.5h-8.5zM716 112h8.5v8.5h-8.5zM724 112h8.5v8.5h-8.5zM732 112h8.5v8.5h-8.5zM740 112h8.5v8.5h-8.5zM748 112h8.5v8.5h-8.5zM756 112h8.5v8.5h-8.5zM764 112h8.5v8.5h-8.5zM652 120h8.5v8.5h-8.5zM660 120h8.5v8.5h-8.5zM804 120h8.5v8.5h-8.5zM812 120h8.5v8.5h-8.5zM636 128h8.5v8.5h-8.5zM860 128h8.5v8.5h-8.5zM868 128h8.5v8.5h-8.5zM876 128h8.5v8.5h-8.5zM620 136h8.5v8.5h-8.5zM964 136h8.5v8.5h-8.5zM972 136h8.5v8.5h-8.5zM980 136h8.5v8.5h-8.5zM988 136h8.5v8.5h-8.5zM604 144h8.5v8.5h-8.5zM1012 144h8.5v8.5h-8.5zM548 168h8.5v8.5h-8.5zM556 168h8.5v8.5h-8.5zM508 176h8.5v8.5h-8.5zM516 176h8.5v8.5h-8.5zM372 272h8.5v8.5h-8.5zM364 280h8.5v8.5h-8.5zM324 312h8.5v8.5h-8.5zM300 320h8.5v8.5h-8.5z"/>
<path fill="#378602" d="M668 112h8.5v8.5h-8.5zM676 112h8.5v8.5h-8.5zM684 112h8.5v8.5h-8.5zM772 112h8.5v8.5h-8.5zM780 112h8.5v8.5h-8.5zM788 112h8.5v8.5h-8.5zM644 120h8.5v8.5h-8.5zM820 120h8.5v8.5h-8.5zM828 120h8.5v8.5h-8.5zM836 120h8.5v8.5h-8.5zM844 120h8.5v8.5h-8.5zM852 120h8.5v8.5h-8.5zM628 128h8.5v8.5h-8.5zM884 128h8.5v8.5h-8.5zM892 128h8.5v8.5h-8.5zM900 128h8.5v8.5h-8.5zM908 128h8.5v8.5h-8.5zM916 128h8.5v8.5h-8.5zM924 128h8.5v8.5h-8.5zM932 128h8.5v8.5h-8.5zM940 128h8.5v8.5h-8.5zM948 128h8.5v8.5h-8.5zM956 128h8.5v8.5h-8.5zM612 136h8.5v8.5h-8.5zM996 136h8.5v8.5h-8.5zM1020 144h8.5v8.5h-8.5zM588 152h8.5v8.5h-8.5zM1036 152h8.5v8.5h-8.5zM572 160h8.5v8.5h-8.5zM532 168h8.5v8.5h-8.5zM540 168h8.5v8.5h-8.5zM412 232h8.5v8.5h-8.5zM404 240h8.5v8.5h-8.5zM396 248h8.5v8.5h-8.5zM388 256h8.5v8.5h-8.5zM380 264h8.5v8.5h-8.5zM348 288h8.5v8.5h-8.5zM340 296h8.5v8.5h-8.5zM332 304h8.5v8.5h-8.5zM316 312h8.5v8.5h-8.5z"/>
<path fill="#338602" d="M684 104h8.5v8.5h-8.5zM692 104h8.5v8.5h-8.5zM700 104h8.5v8.5h-8.5zM708 104h8.5v8.5h-8.5zM652 112h8.5v8.5h-8.5zM660 112h8.5v8.5h-8.5zM796 112h8.5v8.5h-8.5zM804 112h8.5v8.5h-8.5zM636 120h8.5v8.5h-8.5zM860 120h8.5v8.5h-8.5zM868 120h8.5v8.5h-8.5zM876 120h8.5v8.5h-8.5zM620 128h8.5v8.5h-8.5zM964 128h8.5v8.5h-8.5zM972 128h8.5v8.5h-8.5zM980 128h8.5v8.5h-8.5zM1004 136h8.5v8.5h-8.5zM596 144h8.5v8.5h-8.5zM580 152h8.5v8.5h-8.5zM556 160h8.5v8.5h-8.5zM564 160h8.5v8.5h-8.5zM516 168h8.5v8.5h-8.5zM524 168h8.5v8.5h-8.5zM364 272h8.5v8.5h-8.5zM356 280h8.5v8.5h-8.5zM332 296h8.5v8.5h-8.5zM324 304h8.5v8.5h-8.5zM308 312h8.5v8.5h-8.5z"/>
<path fill="#2e8602" d="M660 104h8.5v8.5h-8.5zM668 104h8.5v8.5h-8.5zM676 104h8.5v8.5h-8.5zM716 104h8.5v8.5h-8.5zM724 104h8.5v8.5h-8.5zM732 104h8.5v8.5h-8.5zM740 104h8.5v8.5h-8.5zM748 104h8.5v8.5h-8.5zM756 104h8.5v8.5h-8.5zM644 112h8.5v8.5h-8.5zM812 112h8.5v8.5h-8.5zM820 112h8.5v8.5h-8.5zM628 120h8.5v8.5h-8.5zM884 120h8.5v8.5h-8.5zM892 120h8.5v8.5h-8.5zM900 120h8.5v8.5h-8.5zM908 120h8.5v8.5h-8.5zM916 120h8.5v8.5h-8.5zM924 120h8.5v8.5h-8.5zM932 120h8.5v8.5h-8.5zM940 120h8.5v8.5h-8.5zM988 128h8.5v8.5h-8.5zM604 136h8.5v8.5h-8.5zM1012 136h8.5v8.5h-8.5zM588 144h8.5v8.5h-8.5zM1028 144h8.5v8.5h-8.5zM572 152h8.5v8.5h-8.5zM548 160h8.5v8.5h-8.5zM404 232h8.5v8.5h-8.5zM396 240h8.5v8.5h-8.5zM388 248h8.5v8.5h-8.5zM380 256h8.5v8.5h-8.5zM372 264h8.5v8.5h-8.5zM348 280h8.5v8.5h-8.5zM340 288h8.5v8.5h-8.5zM316 304h8.5v8.5h-8.5zM300 312h8.5v8.5h-8.5z"/>
<path fill="#2a8602" d="M652 104h8.5v8.5h-8.5zM764 104h8.5v8.5h-8.5zM772 104h8.5v8.5h-8.5zM780 104h8.5v8.5h-8.5zM636 112h8.5v8.5h-8.5zM828 112h8.5v8.5h-8.5zM836 112h8.5v8.5h-8.5zM844 112h8.5v8.5h-8.5zM852 112h8.5v8.5h-8.5zM860 112h8.5v8.5h-8.5zM620 120h8.5v8.5h-8.5zM948 120h8.5v8.5h-8.5zM956 120h8.5v8.5h-8.5zM964 120h8.5v8.5h-8.5zM612 128h8.5v8.5h-8.5zM996 128h8.5v8.5h-8.5zM596 136h8.5v8.5h-8.5zM1020 136h8.5v8.5h-8.5zM580 144h8.5v8.5h-8.5zM1036 144h8.5v8.5h-8.5zM564 152h8.5v8.5h-8.5zM532 160h8.5v8.5h-8.5zM540 160h8.5v8.5h-8.5zM364 264h8.5v8.5h-8.5zM356 272h8.5v8.5h-8.5zM332 288h8.5v8.5h-8.5zM324 296h8.5v8.5h-8.5zM308 304h8.5v8.5h-8.5z"/>
<path fill="#258602" d="M668 96h8.5v8.5h-8.5zM676 96h8.5v8.5h-8.5zM684 96h8.5v8.5h-8.5zM692 96h8.5v8.5h-8.5zM700 96h8.5v8.5h-8.5zM708 96h8.5v8.5h-8.5zM644 104h8.5v8.5h-8.5zM788 104h8.5v8.5h-8.5zM796 104h8.5v8.5h-8.5zM804 104h8.5v8.5h-8.5zM628 112h8.5v8.5h-8.5zM868 112h8.5v8.5h-8.5zM876 112h8.5v8.5h-8.5zM884 112h8.5v8.5h-8.5zM892 112h8.5v8.5h-8.5zM972 120h8.5v8.5h-8.5zM980 120h8.5v8.5h-8.5zM604 128h8.5v8.5h-8.5zM1004 128h8.5v8.5h-8.5zM588 136h8.5v8.5h-8.5zM572 144h8.5v8.5h-8.5zM556 152h8.5v8.5h-8.5zM524 160h8.5v8.5h-8.5zM396 232h8.5v8.5h-8.5zM388 240h8.5v8.5h-8.5zM380 248h8.5v8.5h-8.5zM372 256h8.5v8.5h-8.5zM340 280h8.5v8.5h-8.5zM316 296h8.5v8.5h-8.5zM300 304h8.5v8.5h-8.5z"/>
<path fill="#218602" d="M652 96h8.5v8.5h-8.5zM660 96h8.5v8.5h-8.5zM716 96h8.5v8.5h-8.5zM724 96h8.5v8.5h-8.5zM636 104h8.5v8.5h-8.5zM812 104h8.5v8.5h-8.5zM820 104h8.5v8.5h-8.5zM620 112h8.5v8.5h-8.5zM900 112h8.5v8.5h-8.5zM908 112h8.5v8.5h-8.5zM916 112h8.5v8.5h-8.5zM924 112h8.5v8.5h-8.5zM932 112h8.5v8.5h-8.5zM940 112h8.5v8.5h-8.5zM948 112h8.5v8.5h-8.5zM612 120h8.5v8.5h-8.5zM988 120h8.5v8.5h-8.5zM596 128h8.5v8.5h-8.5zM1012 128h8.5v8.5h-8.5zM1028 136h8.5v8.5h-8.5zM564 144h8.5v8.5h-8.5zM540 152h8.5v8.5h-8.5zM548 152h8.5v8.5h-8.5zM356 264h8.5v8.5h-8.5zM348 272h8.5v8.5h-8.5zM308 296h8.5v8.5h-8.5z"/>
<path fill="#1c8602" d="M676 88h8.5v8.5h-8.5zM684 88h8.5v8.5h-8.5zM692 88h8.5v8.5h-8.5zM644 96h8.5v8.5h-8.5zM732 96h8.5v8.5h-8.5zM740 96h8.5v8.5h-8.5zM748 96h8.5v8.5h-8.5zM628 104h8.5v8.5h-8.5zM828 104h8.5v8.5h-8.5zM836 104h8.5v8.5h-8.5zM844 104h8.5v8.5h-8.5zM852 104h8.5v8.5h-8.5zM956 112h8.5v8.5h-8.5zM964 112h8.5v8.5h-8.5zM604 120h8.5v8.5h-8.5zM996 120h8.5v8.5h-8.5zM588 128h8.5v8.5h-8.5zM580 136h8.5v8.5h-8.5zM556 144h8.5v8.5h-8.5zM532 152h8.5v8.5h-8.5zM380 240h8.5v8.5h-8.5zM372 248h8.5v8.5h-8.5zM364 256h8.5v8.5h-8.5zM300 296h8.5v8.5h-8.5z"/>
<path fill="#188602" d="M660 88h8.5v8.5h-8.5zM668 88h8.5v8.5h-8.5zM700 88h8.5v8.5h-8.5zM708 88h8.5v8.5h-8.5zM636 96h8.5v8.5h-8.5zM756 96h8.5v8.5h-8.5zM764 96h8.5v8.5h-8.5zM772 96h8.5v8.5h-8.5zM620 104h8.5v8.5h-8.5zM860 104h8.5v8.5h-8.5zM868 104h8.5v8.5h-8.5zM876 104h8.5v8.5h-8.5zM884 104h8.5v8.5h-8.5zM892 104h8.5v8.5h-8.5zM900 104h8.5v8.5h-8.5zM908 104h8.5v8.5h-8.5zM916 104h8.5v8.5h-8.5zM924 104h8.5v8.5h-8.5zM612 112h8.5v8.5h-8.5zM972 112h8.5v8.5h-8.5zM980 112h8.5v8.5h-8.5zM596 120h8.5v8.5h-8.5zM1004 120h8.5v8.5h-8.5zM1020 128h8.5v8.5h-8.5zM572 136h8.5v8.5h-8.5zM1036 136h8.5v8.5h-8.5zM548 144h8.5v8.5h-8.5z"/>
<path fill="#148602" d="M644 88h8.5v8.5h-8.5zM652 88h8.5v8.5h-8.5zM716 88h8.5v8.5h-8.5zM628 96h8.5v8.5h-8.5zM780 96h8.5v8.5h-8.5zM788 96h8.5v8.5h-8.5zM796 96h8.5v8.5h-8.5zM804 96h8.5v8.5h-8.5zM932 104h8.5v8.5h-8.5zM940 104h8.5v8.5h-8.5zM604 112h8.5v8.5h-8.5zM988 112h8.5v8.5h-8.5zM580 128h8.5v8.5h-8.5zM564 136h8.5v8.5h-8.5zM532 144h8.5v8.5h-8.5zM540 144h8.5v8.5h-8.5z"/>
<path fill="#0f8602" d="M668 80h8.5v8.5h-8.5zM676 80h8.5v8.5h-8.5zM684 80h8.5v8.5h-8.5zM636 88h8.5v8.5h-8.5zM724 88h8.5v8.5h-8.5zM812 96h8.5v8.5h-8.5zM820 96h8.5v8.5h-8.5zM612 104h8.5v8.5h-8.5zM948 104h8.5v8.5h-8.5zM956 104h8.5v8.5h-8.5zM596 112h8.5v8.5h-8.5zM996 112h8.5v8.5h-8.5zM588 120h8.5v8.5h-8.5zM1012 120h8.5v8.5h-8.5zM572 128h8.5v8.5h-8.5zM1028 128h8.5v8.5h-8.5zM548 136h8.5v8.5h-8.5zM556 136h8.5v8.5h-8.5z"/>
<path fill="#0b8602" d="M652 80h8.5v8.5h-8.5zM660 80h8.5v8.5h-8.5zM692 80h8.5v8.5h-8.5zM700 80h8.5v8.5h-8.5zM732 88h8.5v8.5h-8.5zM740 88h8.5v8.5h-8.5zM620 96h8.5v8.5h-8.5zM828 96h8.5v8.5h-8.5zM836 96h8.5v8.5h-8.5zM844 96h8.5v8.5h-8.5zM852 96h8.5v8.5h-8.5zM860 96h8.5v8.5h-8.5zM868 96h8.5v8.5h-8.5zM876 96h8.5v8.5h-8.5zM884 96h8.5v8.5h-8.5zM892 96h8.5v8.5h-8.5zM900 96h8.5v8.5h-8.5zM908 96h8.5v8.5h-8.5zM916 96h8.5v8.5h-8.5zM924 96h8.5v8.5h-8.5zM604 104h8.5v8.5h-8.5zM964 104h8.5v8.5h-8.5zM972 104h8.5v8.5h-8.5zM580 120h8.5v8.5h-8.5zM564 128h8.5v8.5h-8.5zM540 136h8.5v8.5h-8.5z"/>
<path fill="#068602" d="M644 80h8.5v8.5h-8.5zM708 80h8.5v8.5h-8.5zM748 88h8.5v8.5h-8.5zM756 88h8.5v8.5h-8.5zM932 96h8.5v8.5h-8.5zM940 96h8.5v8.5h-8.5zM980 104h8.5v8.5h-8.5zM588 112h8.5v8.5h-8.5zM1004 112h8.5v8.5h-8.5zM572 120h8.5v8.5h-8.5zM1020 120h8.5v8.5h-8.5zM556 128h8.5v8.5h-8.5zM1036 128h8.5v8.5h-8.5z"/>
<path fill="#028602" d="M660 72h8.5v8.5h-8.5zM668 72h8.5v8.5h-8.5zM676 72h8.5v8.5h-8.5zM684 72h8.5v8.5h-8.5zM716 80h8.5v8.5h-8.5zM764 88h8.5v8.5h-8.5zM772 88h8.5v8.5h-8.5zM948 96h8.5v8.5h-8.5zM988 104h8.5v8.5h-8.5zM564 120h8.5v8.5h-8.5z"/>
<path fill="#028606" d="M692 72h8.5v8.5h-8.5zM780 88h8.5v8.5h-8.5zM788 88h8.5v8.5h-8.5zM796 88h8.5v8.5h-8.5zM804 88h8.5v8.5h-8.5zM812 88h8.5v8.5h-8.5zM820 88h8.5v8.5h-8.5zM828 88h8.5v8.5h-8.5zM876 88h8.5v8.5h-8.5zM884 88h8.5v8.5h-8.5zM892 88h8.5v8.5h-8.5zM900 88h8.5v8.5h-8.5zM908 88h8.5v8.5h-8.5zM956 96h8.5v8.5h-8.5zM996 104h8.5v8.5h-8.5zM1028 120h8.5v8.5h-8.5z"/>
<path fill="#02860b" d="M700 72h8.5v8.5h-8.5zM724 80h8.5v8.5h-8.5zM836 88h8.5v8.5h-8.5zM844 88h8.5v8.5h-8.5zM852 88h8.5v8.5h-8.5zM860 88h8.5v8.5h-8.5zM868 88h8.5v8.5h-8.5zM916 88h8.5v8.5h-8.5zM924 88h8.5v8.5h-8.5zM932 88h8.5v8.5h-8.5zM964 96h8.5v8.5h-8.5zM1012 112h8.5v8.5h-8.5z"/>
<path fill="#02860f" d="M668 64h8.5v8.5h-8.5zM676 64h8.5v8.5h-8.5zM684 64h8.5v8.5h-8.5zM708 72h8.5v8.5h-8.5zM732 80h8.5v8.5h-8.5zM940 88h8.5v8.5h-8.5zM972 96h8.5v8.5h-8.5zM1036 120h8.5v8.5h-8.5z"/>
<path fill="#028614" d="M692 64h8.5v8.5h-8.5zM716 72h8.5v8.5h-8.5zM740 80h8.5v8.5h-8.5zM748 80h8.5v8.5h-8.5zM948 88h8.5v8.5h-8.5zM980 96h8.5v8.5h-8.5zM1004 104h8.5v8.5h-8.5zM1020 112h8.5v8.5h-8.5z"/>
<path fill="#028618" d="M700 64h8.5v8.5h-8.5zM756 80h8.5v8.5h-8.5zM764 80h8.5v8.5h-8.5zM812 80h8.5v8.5h-8.5zM820 80h8.5v8.5h-8.5zM828 80h8.5v8.5h-8.5zM860 80h8.5v8.5h-8.5zM868 80h8.5v8.5h-8.5zM876 80h8.5v8.5h-8.5zM884 80h8.5v8.5h-8.5zM892 80h8.5v8.5h-8.5zM900 80h8.5v8.5h-8.5zM908 80h8.5v8.5h-8.5zM916 80h8.5v8.5h-8.5zM924 80h8.5v8.5h-8.5zM956 88h8.5v8.5h-8.5zM988 96h8.5v8.5h-8.5z"/>
<path fill="#02861c" d="M676 56h8.5v8.5h-8.5zM708 64h8.5v8.5h-8.5zM724 72h8.5v8.5h-8.5zM772 80h8.5v8.5h-8.5zM780 80h8.5v8.5h-8.5zM788 80h8.5v8.5h-8.5zM796 80h8.5v8.5h-8.5zM804 80h8.5v8.5h-8.5zM836 80h8.5v8.5h-8.5zM844 80h8.5v8.5h-8.5zM852 80h8.5v8.5h-8.5zM932 80h8.5v8.5h-8.5zM996 96h8.5v8.5h-8.5zM1012 104h8.5v8.5h-8.5zM1028 112h8.5v8.5h-8.5z"/>
<path fill="#028621" d="M684 56h8.5v8.5h-8.5zM692 56h8.5v8.5h-8.5zM940 80h8.5v8.5h-8.5zM964 88h8.5v8.5h-8.5zM1036 112h8.5v8.5h-8.5z"/>
<path fill="#028625" d="M700 56h8.5v8.5h-8.5zM716 64h8.5v8.5h-8.5zM732 72h8.5v8.5h-8.5zM876 72h8.5v8.5h-8.5zM884 72h8.5v8.5h-8.5zM892 72h8.5v8.5h-8.5zM900 72h8.5v8.5h-8.5zM908 72h8.5v8.5h-8.5zM972 88h8.5v8.5h-8.5z"/>
<path fill="#02862a" d="M740 72h8.5v8.5h-8.5zM820 72h8.5v8.5h-8.5zM828 72h8.5v8.5h-8.5zM836 72h8.5v8.5h-8.5zM844 72h8.5v8.5h-8.5zM852 72h8.5v8.5h-8.5zM860 72h8.5v8.5h-8.5zM868 72h8.5v8.5h-8.5zM916 72h8.5v8.5h-8.5zM924 72h8.5v8.5h-8.5zM948 80h8.5v8.5h-8.5zM980 88h8.5v8.5h-8.5zM1004 96h8.5v8.5h-8.5zM1020 104h8.5v8.5h-8.5z"/>
<path fill="#02862e" d="M676 48h8.5v8.5h-8.5zM684 48h8.5v8.5h-8.5zM708 56h8.5v8.5h-8.5zM724 64h8.5v8.5h-8.5zM748 72h8.5v8.5h-8.5zM756 72h8.5v8.5h-8.5zM804 72h8.5v8.5h-8.5zM812 72h8.5v8.5h-8.5zM932 72h8.5v8.5h-8.5zM956 80h8.5v8.5h-8.5zM988 88h8.5v8.5h-8.5z"/>
<path fill="#028633" d="M692 48h8.5v8.5h-8.5zM764 72h8.5v8.5h-8.5zM772 72h8.5v8.5h-8.5zM780 72h8.5v8.5h-8.5zM788 72h8.5v8.5h-8.5zM796 72h8.5v8.5h-8.5zM940 72h8.5v8.5h-8.5zM964 80h8.5v8.5h-8.5zM1028 104h8.5v8.5h-8.5z"/>
<path fill="#028637" d="M700 48h8.5v8.5h-8.5zM716 56h8.5v8.5h-8.5zM732 64h8.5v8.5h-8.5zM852 64h8.5v8.5h-8.5zM860 64h8.5v8.5h-8.5zM868 64h8.5v8.5h-8.5zM876 64h8.5v8.5h-8.5zM884 64h8.5v8.5h-8.5zM892 64h8.5v8.5h-8.5zM900 64h8.5v8.5h-8.5zM908 64h8.5v8.5h-8.5zM916 64h8.5v8.5h-8.5zM996 88h8.5v8.5h-8.5zM1012 96h8.5v8.5h-8.5zM1036 104h8.5v8.5h-8.5z"/>
<path fill="#02863b" d="M708 48h8.5v8.5h-8.5zM820 64h8.5v8.5h-8.5zM828 64h8.5v8.5h-8.5zM836 64h8.5v8.5h-8.5zM844 64h8.5v8.5h-8.5zM924 64h8.5v8.5h-8.5zM948 72h8.5v8.5h-8.5zM972 80h8.5v8.5h-8.5z"/>
<path fill="#028640" d="M692 40h8.5v8.5h-8.5zM724 56h8.5v8.5h-8.5zM740 64h8.5v8.5h-8.5zM812 64h8.5v8.5h-8.5zM932 64h8.5v8.5h-8.5zM956 72h8.5v8.5h-8.5zM980 80h8.5v8.5h-8.5zM1020 96h8.5v8.5h-8.5z"/>
<path fill="#028644" d="M700 40h8.5v8.5h-8.5zM716 48h8.5v8.5h-8.5zM876 56h8.5v8.5h-8.5zM884 56h8.5v8.5h-8.5zM892 56h8.5v8.5h-8.5zM900 56h8.5v8.5h-8.5zM908 56h8.5v8.5h-8.5zM748 64h8.5v8.5h-8.5zM756 64h8.5v8.5h-8.5zM764 64h8.5v8.5h-8.5zM772 64h8.5v8.5h-8.5zM796 64h8.5v8.5h-8.5zM804 64h8.5v8.5h-8.5zM940 64h8.5v8.5h-8.5zM988 80h8.5v8.5h-8.5zM1004 88h8.5v8.5h-8.5z"/>
<path fill="#028649" d="M732 56h8.5v8.5h-8.5zM828 56h8.5v8.5h-8.5zM836 56h8.5v8.5h-8.5zM844 56h8.5v8.5h-8.5zM852 56h8.5v8.5h-8.5zM860 56h8.5v8.5h-8.5zM868 56h8.5v8.5h-8.5zM916 56h8.5v8.5h-8.5zM924 56h8.5v8.5h-8.5zM780 64h8.5v8.5h-8.5zM788 64h8.5v8.5h-8.5zM964 72h8.5v8.5h-8.5zM1028 96h8.5v8.5h-8.5z"/>
<path fill="#02864d" d="M708 40h8.5v8.5h-8.5zM724 48h8.5v8.5h-8.5zM812 56h8.5v8.5h-8.5zM820 56h8.5v8.5h-8.5zM932 56h8.5v8.5h-8.5zM948 64h8.5v8.5h-8.5zM1012 88h8.5v8.5h-8.5zM1036 96h8.5v8.5h-8.5z"/>
<path fill="#028651" d="M716 40h8.5v8.5h-8.5zM740 56h8.5v8.5h-8.5zM804 56h8.5v8.5h-8.5zM972 72h8.5v8.5h-8.5zM996 80h8.5v8.5h-8.5z"/>
<path fill="#028656" d="M732 48h8.5v8.5h-8.5zM836 48h8.5v8.5h-8.5zM844 48h8.5v8.5h-8.5zM852 48h8.5v8.5h-8.5zM860 48h8.5v8.5h-8.5zM868 48h8.5v8.5h-8.5zM876 48h8.5v8.5h-8.5zM884 48h8.5v8.5h-8.5zM892 48h8.5v8.5h-8.5zM900 48h8.5v8.5h-8.5zM908 48h8.5v8.5h-8.5zM916 48h8.5v8.5h-8.5zM748 56h8.5v8.5h-8.5zM756 56h8.5v8.5h-8.5zM764 56h8.5v8.5h-8.5zM772 56h8.5v8.5h-8.5zM780 56h8.5v8.5h-8.5zM788 56h8.5v8.5h-8.5zM796 56h8.5v8.5h-8.5zM940 56h8.5v8.5h-8.5zM956 64h8.5v8.5h-8.5zM980 72h8.5v8.5h-8.5zM1020 88h8.5v8.5h-8.5z"/>
<path fill="#02865a" d="M708 32h8.5v8.5h-8.5zM724 40h8.5v8.5h-8.5zM820 48h8.5v8.5h-8.5zM828 48h8.5v8.5h-8.5zM924 48h8.5v8.5h-8.5zM948 56h8.5v8.5h-8.5zM964 64h8.5v8.5h-8.5zM988 72h8.5v8.5h-8.5zM1004 80h8.5v8.5h-8.5z"/>
<path fill="#02865f" d="M716 32h8.5v8.5h-8.5zM740 48h8.5v8.5h-8.5zM804 48h8.5v8.5h-8.5zM812 48h8.5v8.5h-8.5zM932 48h8.5v8.5h-8.5zM1028 88h8.5v8.5h-8.5z"/>
<path fill="#028663" d="M732 40h8.5v8.5h-8.5zM884 40h8.5v8.5h-8.5zM892 40h8.5v8.5h-8.5zM900 40h8.5v8.5h-8.5zM908 40h8.5v8.5h-8.5zM748 48h8.5v8.5h-8.5zM756 48h8.5v8.5h-8.5zM796 48h8.5v8.5h-8.5zM940 48h8.5v8.5h-8.5zM956 56h8.5v8.5h-8.5zM972 64h8.5v8.5h-8.5zM996 72h8.5v8.5h-8.5zM1036 88h8.5v8.5h-8.5z"/>
<path fill="#028667" d="M724 32h8.5v8.5h-8.5zM740 40h8.5v8.5h-8.5zM820 40h8.5v8.5h-8.5zM828 40h8.5v8.5h-8.5zM836 40h8.5v8.5h-8.5zM844 40h8.5v8.5h-8.5zM852 40h8.5v8.5h-8.5zM860 40h8.5v8.5h-8.5zM868 40h8.5v8.5h-8.5zM876 40h8.5v8.5h-8.5zM916 40h8.5v8.5h-8.5zM924 40h8.5v8.5h-8.5zM764 48h8.5v8.5h-8.5zM772 48h8.5v8.5h-8.5zM780 48h8.5v8.5h-8.5zM788 48h8.5v8.5h-8.5zM980 64h8.5v8.5h-8.5zM1012 80h8.5v8.5h-8.5z"/>
<path fill="#02866c" d="M804 40h8.5v8.5h-8.5zM812 40h8.5v8.5h-8.5zM932 40h8.5v8.5h-8.5zM948 48h8.5v8.5h-8.5zM964 56h8.5v8.5h-8.5zM1020 80h8.5v8.5h-8.5z"/>
<path fill="#028670" d="M732 32h8.5v8.5h-8.5zM748 40h8.5v8.5h-8.5zM756 40h8.5v8.5h-8.5zM764 40h8.5v8.5h-8.5zM788 40h8.5v8.5h-8.5zM796 40h8.5v8.5h-8.5zM940 40h8.5v8.5h-8.5zM956 48h8.5v8.5h-8.5zM988 64h8.5v8.5h-8.5zM1004 72h8.5v8.5h-8.5z"/>
<path fill="#028675" d="M724 24h8.5v8.5h-8.5zM740 32h8.5v8.5h-8.5zM828 32h8.5v8.5h-8.5zM836 32h8.5v8.5h-8.5zM844 32h8.5v8.5h-8.5zM852 32h8.5v8.5h-8.5zM860 32h8.5v8.5h-8.5zM868 32h8.5v8.5h-8.5zM876 32h8.5v8.5h-8.5zM884 32h8.5v8.5h-8.5zM892 32h8.5v8.5h-8.5zM900 32h8.5v8.5h-8.5zM908 32h8.5v8.5h-8.5zM916 32h8.5v8.5h-8.5zM772 40h8.5v8.5h-8.5zM780 40h8.5v8.5h-8.5zM972 56h8.5v8.5h-8.5zM996 64h8.5v8.5h-8.5zM1028 80h8.5v8.5h-8.5zM1036 80h8.5v8.5h-8.5z"/>
<path fill="#028679" d="M732 24h8.5v8.5h-8.5zM748 32h8.5v8.5h-8.5zM812 32h8.5v8.5h-8.5zM820 32h8.5v8.5h-8.5zM924 32h8.5v8.5h-8.5zM932 32h8.5v8.5h-8.5zM948 40h8.5v8.5h-8.5zM964 48h8.5v8.5h-8.5zM980 56h8.5v8.5h-8.5zM1012 72h8.5v8.5h-8.5z"/>
<path fill="#02867e" d="M756 32h8.5v8.5h-8.5zM764 32h8.5v8.5h-8.5zM772 32h8.5v8.5h-8.5zM780 32h8.5v8.5h-8.5zM788 32h8.5v8.5h-8.5zM796 32h8.5v8.5h-8.5zM804 32h8.5v8.5h-8.5zM940 32h8.5v8.5h-8.5zM956 40h8.5v8.5h-8.5zM988 56h8.5v8.5h-8.5zM1004 64h8.5v8.5h-8.5z"/>
<path fill="#028682" d="M740 24h8.5v8.5h-8.5zM828 24h8.5v8.5h-8.5zM836 24h8.5v8.5h-8.5zM844 24h8.5v8.5h-8.5zM852 24h8.5v8.5h-8.5zM860 24h8.5v8.5h-8.5zM868 24h8.5v8.5h-8.5zM876 24h8.5v8.5h-8.5zM884 24h8.5v8.5h-8.5zM892 24h8.5v8.5h-8.5zM900 24h8.5v8.5h-8.5zM908 24h8.5v8.5h-8.5zM972 48h8.5v8.5h-8.5zM1020 72h8.5v8.5h-8.5z"/>
<path fill="#028686" d="M748 24h8.5v8.5h-8.5zM756 24h8.5v8.5h-8.5zM812 24h8.5v8.5h-8.5zM820 24h8.5v8.5h-8.5zM916 24h8.5v8.5h-8.5zM924 24h8.5v8.5h-8.5zM948 32h8.5v8.5h-8.5zM964 40h8.5v8.5h-8.5zM980 48h8.5v8.5h-8.5zM996 56h8.5v8.5h-8.5zM1012 64h8.5v8.5h-8.5zM1028 72h8.5v8.5h-8.5zM1036 72h8.5v8.5h-8.5z"/>
<path fill="#028286" d="M764 24h8.5v8.5h-8.5zM772 24h8.5v8.5h-8.5zM780 24h8.5v8.5h-8.5zM788 24h8.5v8.5h-8.5zM796 24h8.5v8.5h-8.5zM804 24h8.5v8.5h-8.5zM932 24h8.5v8.5h-8.5zM956 32h8.5v8.5h-8.5zM988 48h8.5v8.5h-8.5z"/>
<path fill="#027e86" d="M748 16h8.5v8.5h-8.5zM940 24h8.5v8.5h-8.5zM972 40h8.5v8.5h-8.5zM1004 56h8.5v8.5h-8.5zM1020 64h8.5v8.5h-8.5z"/>
<path fill="#027986" d="M756 16h8.5v8.5h-8.5zM764 16h8.5v8.5h-8.5zM804 16h8.5v8.5h-8.5zM812 16h8.5v8.5h-8.5zM820 16h8.5v8.5h-8.5zM828 16h8.5v8.5h-8.5zM836 16h8.5v8.5h-8.5zM844 16h8.5v8.5h-8.5zM852 16h8.5v8.5h-8.5zM860 16h8.5v8.5h-8.5zM868 16h8.5v8.5h-8.5zM876 16h8.5v8.5h-8.5zM884 16h8.5v8.5h-8.5zM892 16h8.5v8.5h-8.5zM900 16h8.5v8.5h-8.5zM908 16h8.5v8.5h-8.5zM916 16h8.5v8.5h-8.5zM948 24h8.5v8.5h-8.5zM964 32h8.5v8.5h-8.5zM980 40h8.5v8.5h-8.5zM996 48h8.5v8.5h-8.5zM1012 56h8.5v8.5h-8.5zM1028 64h8.5v8.5h-8.5z"/>
<path fill="#027586" d="M772 16h8.5v8.5h-8.5zM780 16h8.5v8.5h-8.5zM788 16h8.5v8.5h-8.5zM796 16h8.5v8.5h-8.5zM924 16h8.5v8.5h-8.5zM932 16h8.5v8.5h-8.5zM956 24h8.5v8.5h-8.5zM972 32h8.5v8.5h-8.5zM988 40h8.5v8.5h-8.5zM1004 48h8.5v8.5h-8.5zM1036 64h8.5v8.5h-8.5z"/>
<path fill="#027086" d="M940 16h8.5v8.5h-8.5zM1020 56h8.5v8.5h-8.5z"/>
<path fill="#026c86" d="M764 8h8.5v8.5h-8.5zM772 8h8.5v8.5h-8.5zM804 8h8.5v8.5h-8.5zM812 8h8.5v8.5h-8.5zM820 8h8.5v8.5h-8.5zM828 8h8.5v8.5h-8.5zM836 8h8.5v8.5h-8.5zM844 8h8.5v8.5h-8.5zM852 8h8.5v8.5h-8.5zM860 8h8.5v8.5h-8.5zM868 8h8.5v8.5h-8.5zM876 8h8.5v8.5h-8.5zM884 8h8.5v8.5h-8.5zM892 8h8.5v8.5h-8.5zM900 8h8.5v8.5h-8.5zM908 8h8.5v8.5h-8.5zM948 16h8.5v8.5h-8.5zM964 24h8.5v8.5h-8.5zM980 32h8.5v8.5h-8.5zM996 40h8.5v8.5h-8.5zM1012 48h8.5v8.5h-8.5zM1028 56h8.5v8.5h-8.5z"/>
<path fill="#026786" d="M780 8h8.5v8.5h-8.5zM788 8h8.5v8.5h-8.5zM796 8h8.5v8.5h-8.5zM916 8h8.5v8.5h-8.5zM924 8h8.5v8.5h-8.5zM972 24h8.5v8.5h-8.5zM988 32h8.5v8.5h-8.5zM1004 40h8.5v8.5h-8.5zM1036 56h8.5v8.5h-8.5z"/>
<path fill="#026386" d="M932 8h8.5v8.5h-8.5zM956 16h8.5v8.5h-8.5zM1020 48h8.5v8.5h-8.5z"/>
<path fill="#025f86" d="M940 8h8.5v8.5h-8.5zM964 16h8.5v8.5h-8.5zM980 24h8.5v8.5h-8.5zM996 32h8.5v8.5h-8.5zM1012 40h8.5v8.5h-8.5zM1028 48h8.5v8.5h-8.5z"/>
<path fill="#025a86" d="M948 8h8.5v8.5h-8.5zM972 16h8.5v8.5h-8.5zM988 24h8.5v8.5h-8.5zM1004 32h8.5v8.5h-8.5zM1036 48h8.5v8.5h-8.5z"/>
<path fill="#025a86" d="M956 8h8.5v8.5h-8.5zM1020 40h8.5v8.5h-8.5z"/>
<path fill="#025a86" d="M964 8h8.5v8.5h-8.5zM980 16h8.5v8.5h-8.5zM996 24h8.5v8.5h-8.5zM1012 32h8.5v8.5h-8.5zM1028 40h8.5v8.5h-8.5z"/>
<path fill="#025a86" d="M972 8h8.5v8.5h-8.5zM988 16h8.5v8.5h-8.5zM1004 24h8.5v8.5h-8.5zM1020 32h8.5v8.5h-8.5zM1036 40h8.5v8.5h-8.5z"/>
<path fill="#025a86" d="M980 8h8.5v8.5h-8.5zM996 16h8.5v8.5h-8.5zM1012 24h8.5v8.5h-8.5zM1028 32h8.5v8.5h-8.5z"/>
<path fill="#025a86" d="M988 8h8.5v8.5h-8.5zM1004 16h8.5v8.5h-8.5zM1020 24h8.5v8.5h-8.5zM1036 32h8.5v8.5h-8.5z"/>
<path fill="#025a86" d="M996 8h8.5v8.5h-8.5zM1012 16h8.5v8.5h-8.5zM1028 24h8.5v8.5h-8.5z"/>
<path fill="#025a86" d="M1036 24h8.5v8.5h-8.5z"/>
<path fill="#025a86" d="M1004 8h8.5v8.5h-8.5zM1020 16h8.5v8.5h-8.5z"/>
<path fill="#025a86" d="M1012 8h8.5v8.5h-8.5zM1028 16h8.5v8.5h-8.5z"/>
<path fill="#025a86" d="M1020 8h8.5v8.5h-8.5zM1036 16h8.5v8.5h-8.5z"/>
<path fill="#025a86" d="M1028 8h8.5v8.5h-8.5z"/>
<path fill="#025a86" d="M1036 8h8.5v8.5h-8.5z"/>
</g>
<rect x="300" y="20" width="740" height="390" fill="#000" opacity="0.4" mask="url(#dm)"/>
<g mask="url(#dm)"><rect x="300" y="20" width="740" height="390" filter="url(#nz)"/></g>
</g>
<path d="M314.0 393.0C314.3 392.3 314.1 392.0 316.0 388.7C317.9 385.4 322.3 378.2 325.5 373.4C328.7 368.6 331.5 363.6 335.0 360.0C338.5 356.4 342.3 354.0 346.5 351.5C350.7 349.0 355.6 347.4 360.0 344.8C364.4 342.2 369.2 339.2 373.0 336.0C376.8 332.8 380.2 328.4 383.0 325.7C385.8 322.9 387.3 321.9 389.5 319.5C391.7 317.1 391.9 315.5 396.0 311.5C400.1 307.5 408.0 299.7 414.0 295.6C420.0 291.5 424.5 289.7 432.0 286.7C439.5 283.7 450.1 281.0 459.0 277.7C467.9 274.4 476.8 271.4 485.6 266.6C494.4 261.8 503.1 255.0 512.0 248.7C520.9 242.4 531.0 234.2 539.0 228.6C547.0 223.0 552.5 220.5 560.0 215.0C567.5 209.5 576.0 201.9 584.0 195.5C592.0 189.1 599.8 182.0 607.7 176.4C615.6 170.8 623.6 166.4 631.6 162.0C639.6 157.6 647.6 154.2 655.5 150.0C663.4 145.8 671.1 140.9 679.0 137.0C686.9 133.1 695.0 129.6 703.0 126.5C711.0 123.4 719.0 121.0 727.0 118.5C735.0 116.0 742.3 114.5 751.0 111.5C759.7 108.5 770.3 103.9 779.0 100.5C787.7 97.1 795.8 93.5 803.0 91.0C810.2 88.5 816.2 87.3 822.0 85.5C827.8 83.7 831.8 83.0 838.0 80.4C844.2 77.8 852.0 73.2 859.0 70.0C866.0 66.8 873.4 63.7 880.0 61.5C886.6 59.3 891.5 58.2 898.5 57.0C905.5 55.8 914.1 54.9 922.0 54.0C929.9 53.1 936.3 53.0 946.0 51.8C955.7 50.6 967.8 48.7 980.0 46.7C992.2 44.7 1012.9 41.1 1019.5 40.0" fill="none" stroke="#3a2400" stroke-opacity="0.35" stroke-width="3.6" stroke-dasharray="1.1 1.5"/>
<path d="M314.0 393.0C314.3 392.3 314.1 392.0 316.0 388.7C317.9 385.4 322.3 378.2 325.5 373.4C328.7 368.6 331.5 363.6 335.0 360.0C338.5 356.4 342.3 354.0 346.5 351.5C350.7 349.0 355.6 347.4 360.0 344.8C364.4 342.2 369.2 339.2 373.0 336.0C376.8 332.8 380.2 328.4 383.0 325.7C385.8 322.9 387.3 321.9 389.5 319.5C391.7 317.1 391.9 315.5 396.0 311.5C400.1 307.5 408.0 299.7 414.0 295.6C420.0 291.5 424.5 289.7 432.0 286.7C439.5 283.7 450.1 281.0 459.0 277.7C467.9 274.4 476.8 271.4 485.6 266.6C494.4 261.8 503.1 255.0 512.0 248.7C520.9 242.4 531.0 234.2 539.0 228.6C547.0 223.0 552.5 220.5 560.0 215.0C567.5 209.5 576.0 201.9 584.0 195.5C592.0 189.1 599.8 182.0 607.7 176.4C615.6 170.8 623.6 166.4 631.6 162.0C639.6 157.6 647.6 154.2 655.5 150.0C663.4 145.8 671.1 140.9 679.0 137.0C686.9 133.1 695.0 129.6 703.0 126.5C711.0 123.4 719.0 121.0 727.0 118.5C735.0 116.0 742.3 114.5 751.0 111.5C759.7 108.5 770.3 103.9 779.0 100.5C787.7 97.1 795.8 93.5 803.0 91.0C810.2 88.5 816.2 87.3 822.0 85.5C827.8 83.7 831.8 83.0 838.0 80.4C844.2 77.8 852.0 73.2 859.0 70.0C866.0 66.8 873.4 63.7 880.0 61.5C886.6 59.3 891.5 58.2 898.5 57.0C905.5 55.8 914.1 54.9 922.0 54.0C929.9 53.1 936.3 53.0 946.0 51.8C955.7 50.6 967.8 48.7 980.0 46.7C992.2 44.7 1012.9 41.1 1019.5 40.0" fill="none" stroke="#ffff00" stroke-width="2.15"/>
<path d="M334.0 402.0C334.5 401.7 333.1 403.2 337.0 400.0C340.9 396.8 350.4 388.8 357.6 383.0C364.8 377.2 372.1 371.0 380.0 365.0C387.9 359.0 397.2 352.8 405.0 347.0C412.8 341.2 419.7 335.8 427.0 330.5C434.3 325.2 441.2 319.9 449.0 315.0C456.8 310.1 466.4 305.3 474.0 301.0C481.6 296.7 487.4 292.9 494.6 289.0C501.8 285.1 509.6 281.5 517.0 277.7C524.4 273.9 532.3 270.3 539.0 266.0C545.7 261.7 551.0 257.2 557.0 252.0C563.0 246.8 569.0 241.0 575.0 235.0C581.0 229.0 587.5 221.4 593.0 216.0C598.5 210.6 601.3 208.0 607.7 202.6C614.1 197.2 623.6 188.5 631.6 183.5C639.6 178.5 647.6 175.8 655.5 172.5C663.4 169.2 671.1 166.0 679.0 163.5C686.9 161.0 695.0 159.1 703.0 157.5C711.0 155.9 719.0 155.3 727.0 154.0C735.0 152.7 742.3 151.1 751.0 149.5C759.7 147.9 770.3 146.3 779.0 144.5C787.7 142.7 795.0 140.4 803.0 138.5C811.0 136.6 819.0 134.9 827.0 133.0C835.0 131.1 843.0 129.0 851.0 127.0C859.0 125.0 866.8 123.3 874.7 121.0C882.6 118.7 890.6 115.7 898.5 113.0C906.4 110.3 914.1 107.9 922.0 105.0C929.9 102.1 938.0 98.8 946.0 95.4C954.0 92.0 962.0 87.8 970.0 84.4C978.0 81.0 984.7 78.1 994.0 75.0C1003.3 71.9 1020.7 67.5 1026.0 66.0" fill="none" stroke="#3a2400" stroke-opacity="0.35" stroke-width="3.6" stroke-dasharray="1.1 1.5"/>
<path d="M334.0 402.0C334.5 401.7 333.1 403.2 337.0 400.0C340.9 396.8 350.4 388.8 357.6 383.0C364.8 377.2 372.1 371.0 380.0 365.0C387.9 359.0 397.2 352.8 405.0 347.0C412.8 341.2 419.7 335.8 427.0 330.5C434.3 325.2 441.2 319.9 449.0 315.0C456.8 310.1 466.4 305.3 474.0 301.0C481.6 296.7 487.4 292.9 494.6 289.0C501.8 285.1 509.6 281.5 517.0 277.7C524.4 273.9 532.3 270.3 539.0 266.0C545.7 261.7 551.0 257.2 557.0 252.0C563.0 246.8 569.0 241.0 575.0 235.0C581.0 229.0 587.5 221.4 593.0 216.0C598.5 210.6 601.3 208.0 607.7 202.6C614.1 197.2 623.6 188.5 631.6 183.5C639.6 178.5 647.6 175.8 655.5 172.5C663.4 169.2 671.1 166.0 679.0 163.5C686.9 161.0 695.0 159.1 703.0 157.5C711.0 155.9 719.0 155.3 727.0 154.0C735.0 152.7 742.3 151.1 751.0 149.5C759.7 147.9 770.3 146.3 779.0 144.5C787.7 142.7 795.0 140.4 803.0 138.5C811.0 136.6 819.0 134.9 827.0 133.0C835.0 131.1 843.0 129.0 851.0 127.0C859.0 125.0 866.8 123.3 874.7 121.0C882.6 118.7 890.6 115.7 898.5 113.0C906.4 110.3 914.1 107.9 922.0 105.0C929.9 102.1 938.0 98.8 946.0 95.4C954.0 92.0 962.0 87.8 970.0 84.4C978.0 81.0 984.7 78.1 994.0 75.0C1003.3 71.9 1020.7 67.5 1026.0 66.0" fill="none" stroke="#ffff00" stroke-width="2.15"/>
<path d="M373.0 402.0C373.2 401.7 370.8 402.7 374.0 400.0C377.2 397.3 385.8 390.6 392.0 385.8C398.2 381.1 405.0 375.6 411.4 371.5C417.8 367.4 424.1 364.8 430.5 361.0C436.9 357.2 443.2 352.8 449.6 348.6C456.0 344.4 463.6 339.5 468.7 336.0C473.8 332.5 474.9 331.2 480.0 327.5C485.1 323.8 492.2 318.6 499.0 314.0C505.8 309.4 514.3 304.2 521.0 300.0C527.7 295.8 532.5 292.5 539.0 289.0C545.5 285.5 552.5 283.7 560.0 279.0C567.5 274.3 576.0 267.0 584.0 261.0C592.0 255.0 599.8 248.8 607.7 243.0C615.6 237.2 623.6 231.7 631.6 226.5C639.6 221.3 648.4 216.4 655.5 212.0C662.6 207.6 668.2 203.3 674.0 200.0C679.8 196.7 684.3 194.1 690.0 192.0C695.7 189.9 701.1 187.8 708.0 187.4C714.9 187.0 725.3 188.9 731.6 189.5C737.9 190.1 740.9 190.8 746.0 190.8C751.1 190.8 756.2 190.3 762.0 189.3C767.8 188.3 774.5 187.0 781.0 185.0C787.5 183.0 794.2 180.1 801.0 177.5C807.8 174.9 811.4 171.9 821.6 169.5C831.8 167.1 848.5 165.4 862.0 163.0C875.5 160.6 889.2 159.0 902.7 155.0C916.2 151.0 929.5 144.1 943.0 139.0C956.5 133.9 973.2 128.2 984.0 124.5C994.8 120.8 1004.0 118.2 1008.0 117.0" fill="none" stroke="#3a2400" stroke-opacity="0.35" stroke-width="3.6" stroke-dasharray="1.1 1.5"/>
<path d="M373.0 402.0C373.2 401.7 370.8 402.7 374.0 400.0C377.2 397.3 385.8 390.6 392.0 385.8C398.2 381.1 405.0 375.6 411.4 371.5C417.8 367.4 424.1 364.8 430.5 361.0C436.9 357.2 443.2 352.8 449.6 348.6C456.0 344.4 463.6 339.5 468.7 336.0C473.8 332.5 474.9 331.2 480.0 327.5C485.1 323.8 492.2 318.6 499.0 314.0C505.8 309.4 514.3 304.2 521.0 300.0C527.7 295.8 532.5 292.5 539.0 289.0C545.5 285.5 552.5 283.7 560.0 279.0C567.5 274.3 576.0 267.0 584.0 261.0C592.0 255.0 599.8 248.8 607.7 243.0C615.6 237.2 623.6 231.7 631.6 226.5C639.6 221.3 648.4 216.4 655.5 212.0C662.6 207.6 668.2 203.3 674.0 200.0C679.8 196.7 684.3 194.1 690.0 192.0C695.7 189.9 701.1 187.8 708.0 187.4C714.9 187.0 725.3 188.9 731.6 189.5C737.9 190.1 740.9 190.8 746.0 190.8C751.1 190.8 756.2 190.3 762.0 189.3C767.8 188.3 774.5 187.0 781.0 185.0C787.5 183.0 794.2 180.1 801.0 177.5C807.8 174.9 811.4 171.9 821.6 169.5C831.8 167.1 848.5 165.4 862.0 163.0C875.5 160.6 889.2 159.0 902.7 155.0C916.2 151.0 929.5 144.1 943.0 139.0C956.5 133.9 973.2 128.2 984.0 124.5C994.8 120.8 1004.0 118.2 1008.0 117.0" fill="none" stroke="#ffff00" stroke-width="2.15"/>
<path d="M389.0 402.0C389.3 401.7 387.9 402.2 391.0 400.0C394.1 397.8 401.8 391.7 407.5 388.7C413.2 385.7 419.6 383.9 425.0 382.0C430.4 380.1 434.3 379.2 440.0 377.0C445.7 374.8 452.7 371.4 459.0 368.7C465.3 366.0 471.7 363.7 478.0 361.0C484.3 358.3 490.7 355.4 497.0 352.4C503.3 349.4 509.6 346.2 516.0 343.0C522.4 339.8 529.0 336.6 535.4 333.4C541.8 330.2 549.7 326.1 554.5 323.8C559.3 321.5 559.2 321.8 564.0 319.5C568.8 317.2 576.9 313.4 583.0 310.0C589.1 306.6 594.9 303.8 600.6 299.0C606.3 294.2 611.1 287.2 617.0 281.0C622.9 274.8 629.6 268.2 636.0 262.0C642.4 255.8 649.1 248.2 655.5 243.5C661.9 238.8 668.2 236.4 674.6 234.0C681.0 231.6 686.5 230.7 693.6 229.0C700.8 227.3 709.6 225.6 717.5 224.0C725.4 222.4 733.1 220.8 741.0 219.5C748.9 218.2 757.0 217.3 765.0 216.5C773.0 215.7 782.7 215.4 789.0 214.5C795.3 213.6 797.6 212.2 803.0 211.0C808.4 209.8 811.8 210.0 821.6 207.6C831.4 205.2 848.5 199.9 862.0 196.5C875.5 193.1 889.2 191.2 902.7 187.0C916.2 182.8 929.5 177.2 943.0 171.5C956.5 165.8 973.2 158.2 984.0 153.0C994.8 147.8 1001.0 144.5 1008.0 140.5C1015.0 136.5 1023.0 130.9 1026.0 129.0" fill="none" stroke="#3a2400" stroke-opacity="0.35" stroke-width="3.6" stroke-dasharray="1.1 1.5"/>
<path d="M389.0 402.0C389.3 401.7 387.9 402.2 391.0 400.0C394.1 397.8 401.8 391.7 407.5 388.7C413.2 385.7 419.6 383.9 425.0 382.0C430.4 380.1 434.3 379.2 440.0 377.0C445.7 374.8 452.7 371.4 459.0 368.7C465.3 366.0 471.7 363.7 478.0 361.0C484.3 358.3 490.7 355.4 497.0 352.4C503.3 349.4 509.6 346.2 516.0 343.0C522.4 339.8 529.0 336.6 535.4 333.4C541.8 330.2 549.7 326.1 554.5 323.8C559.3 321.5 559.2 321.8 564.0 319.5C568.8 317.2 576.9 313.4 583.0 310.0C589.1 306.6 594.9 303.8 600.6 299.0C606.3 294.2 611.1 287.2 617.0 281.0C622.9 274.8 629.6 268.2 636.0 262.0C642.4 255.8 649.1 248.2 655.5 243.5C661.9 238.8 668.2 236.4 674.6 234.0C681.0 231.6 686.5 230.7 693.6 229.0C700.8 227.3 709.6 225.6 717.5 224.0C725.4 222.4 733.1 220.8 741.0 219.5C748.9 218.2 757.0 217.3 765.0 216.5C773.0 215.7 782.7 215.4 789.0 214.5C795.3 213.6 797.6 212.2 803.0 211.0C808.4 209.8 811.8 210.0 821.6 207.6C831.4 205.2 848.5 199.9 862.0 196.5C875.5 193.1 889.2 191.2 902.7 187.0C916.2 182.8 929.5 177.2 943.0 171.5C956.5 165.8 973.2 158.2 984.0 153.0C994.8 147.8 1001.0 144.5 1008.0 140.5C1015.0 136.5 1023.0 130.9 1026.0 129.0" fill="none" stroke="#ffff00" stroke-width="2.15"/>
<path d="M434.0 402.0C434.7 401.7 433.7 401.3 438.0 400.0C442.3 398.7 453.1 395.7 460.0 394.0C466.9 392.3 473.6 392.0 479.6 390.0C485.6 388.0 490.0 385.5 496.0 382.0C502.0 378.5 508.4 373.4 515.7 369.0C523.0 364.6 533.1 359.3 540.0 355.8C546.9 352.3 551.7 350.5 557.0 348.0C562.3 345.5 569.5 342.0 572.0 340.8" fill="none" stroke="#3a2400" stroke-opacity="0.35" stroke-width="3.6" stroke-dasharray="1.1 1.5"/>
<path d="M434.0 402.0C434.7 401.7 433.7 401.3 438.0 400.0C442.3 398.7 453.1 395.7 460.0 394.0C466.9 392.3 473.6 392.0 479.6 390.0C485.6 388.0 490.0 385.5 496.0 382.0C502.0 378.5 508.4 373.4 515.7 369.0C523.0 364.6 533.1 359.3 540.0 355.8C546.9 352.3 551.7 350.5 557.0 348.0C562.3 345.5 569.5 342.0 572.0 340.8" fill="none" stroke="#ffff00" stroke-width="2.15"/>
<path d="M1019.5 33.6L1029.0 39.0L1020.9 46.5Z" fill="#ffff00"/>
<path d="M1005.8 111.2L1014.4 115.0L1010.4 122.7Z" fill="#ffff00"/>
<path d="M569.4 335.1L578.2 337.9L574.4 345.8Z" fill="#ffff00"/>
</svg>
</div>
<span class="t" style="left:317.4px;top:405.6px;font-size:6.05px;line-height:8px;color:#111;-webkit-text-stroke:0.12px #111;">Time Series Editor</span>

</body></html>
